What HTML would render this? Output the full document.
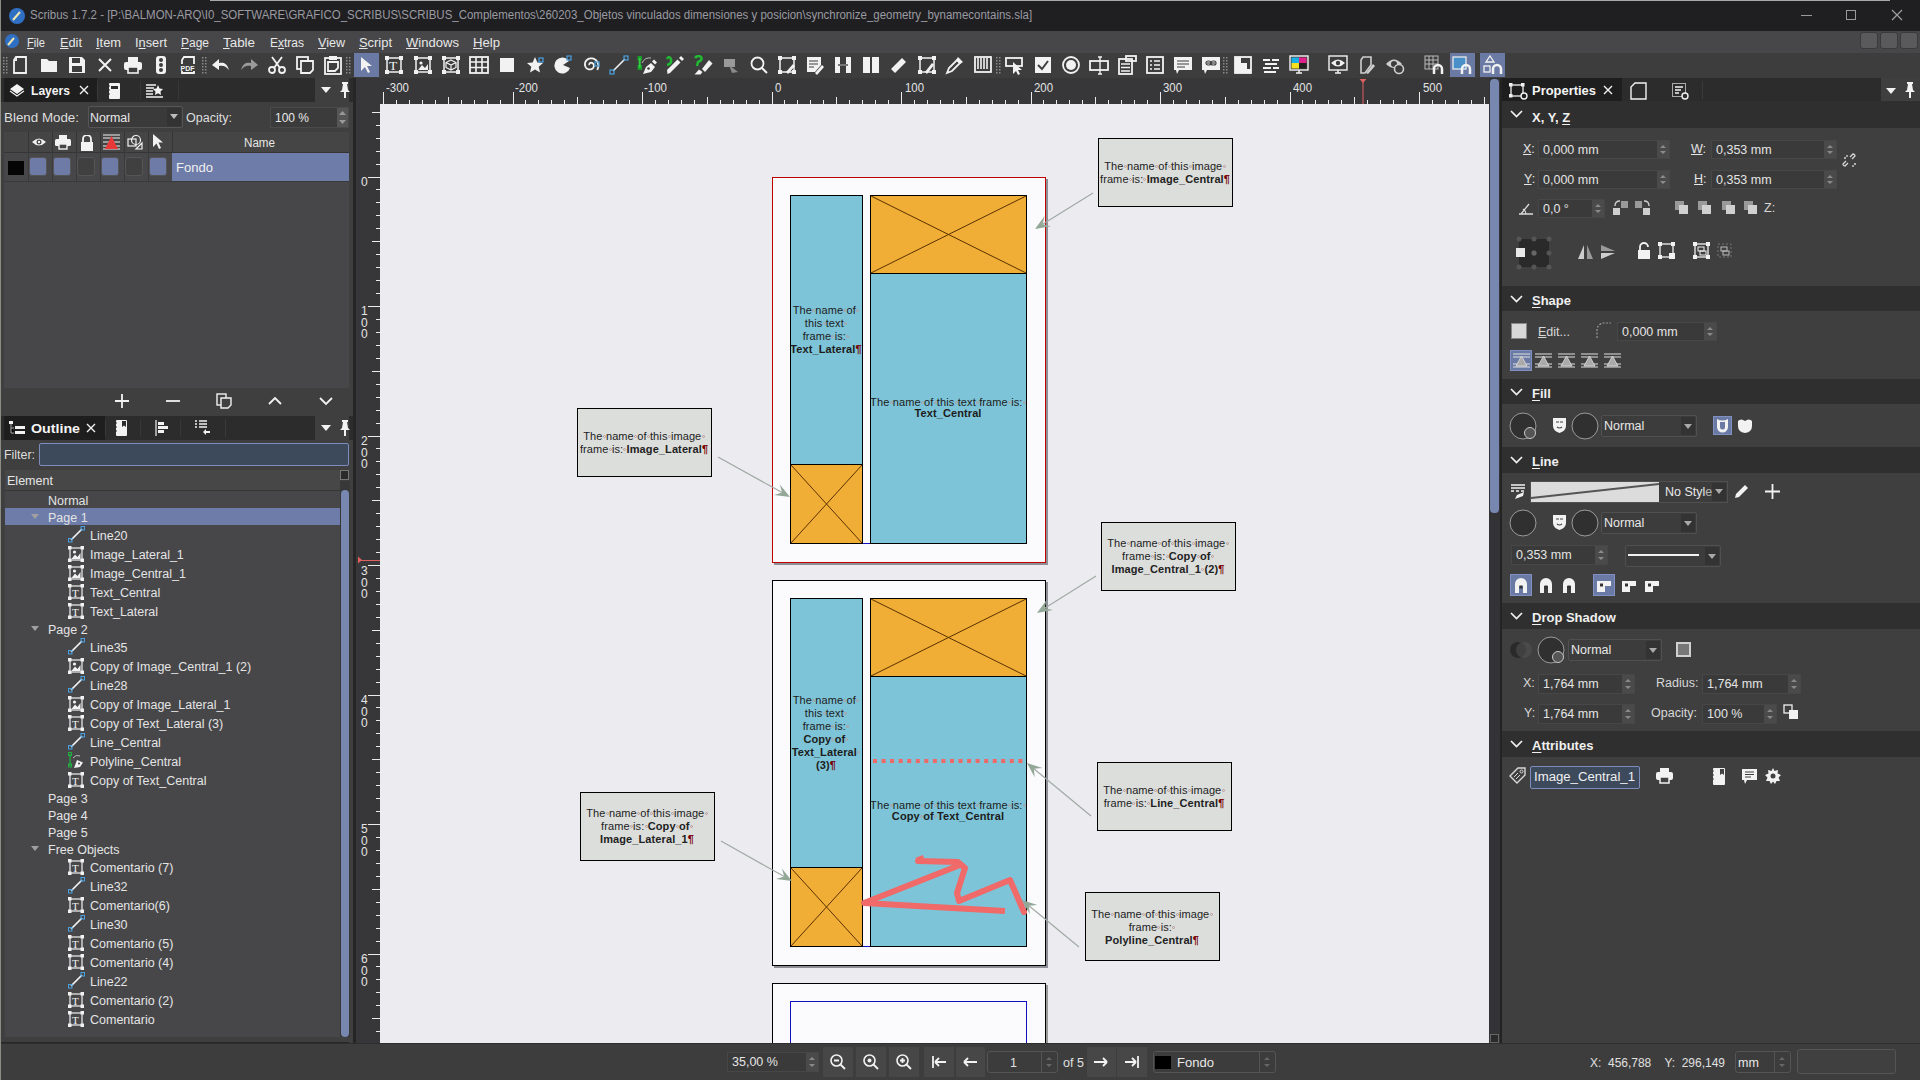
<!DOCTYPE html><html><head><meta charset="utf-8"><style>
*{margin:0;padding:0;box-sizing:border-box}
html,body{width:1920px;height:1080px;overflow:hidden;background:#3f3f3f;font-family:"Liberation Sans",sans-serif;color:#e6e6e6;font-size:12px;line-height:1}
div,svg{position:absolute}
.t{white-space:nowrap;transform-origin:0 0}
.ic{fill:none;stroke:#f2f2f2;stroke-width:1.6}
.f{fill:#f2f2f2}
</style></head><body><div style="left:0px;top:0px;width:1920px;height:31px;background:#1f1f22;"></div>
<div style="left:210px;top:0px;width:1680px;height:1px;background:#a8a8a8;"></div>
<div style="left:0px;top:31px;width:1920px;height:22px;background:#47474a;"></div>
<div style="left:0px;top:53px;width:1920px;height:25px;background:#3d3d3d;"></div>
<div style="left:0px;top:78px;width:353px;height:965px;background:#3f3f3f;"></div>
<div style="left:353px;top:78px;width:3px;height:965px;background:#262626;"></div>
<div style="left:356px;top:78px;width:1133px;height:26px;background:#37373a;"></div>
<div style="left:356px;top:104px;width:24px;height:939px;background:#37373a;"></div>
<div style="left:380px;top:104px;width:1109px;height:939px;background:#ebebf0;"></div>
<div style="left:1489px;top:78px;width:11px;height:965px;background:#333336;"></div>
<div style="left:1490px;top:79px;width:9px;height:434px;background:#7787b0;border-radius:4px"></div>
<div style="left:1490px;top:1034px;width:9px;height:9px;background:#2a2a2a;border:1px solid #666"></div>
<div style="left:1500px;top:78px;width:2px;height:965px;background:#232323;"></div>
<div style="left:1502px;top:78px;width:418px;height:965px;background:#3f3f3f;"></div>
<div style="left:0px;top:1043px;width:1920px;height:37px;background:#3d3d3d;"></div>
<svg style="left:8px;top:7px;" width="18" height="18" viewBox="0 0 18 18"><circle cx="9" cy="9" r="8" fill="#2f6fc4"/><path d="M5 13 L12 5" stroke="#f0e6b0" stroke-width="2"/></svg>
<div class="t" style="left:30px;top:9px;font-size:12px;color:#9a9aa0;transform:scaleX(0.9562);">Scribus 1.7.2 - [P:\BALMON-ARQ\I0_SOFTWARE\GRAFICO_SCRIBUS\SCRIBUS_Complementos\260203_Objetos vinculados dimensiones y posicion\synchronize_geometry_bynamecontains.sla]</div>
<div style="left:1801px;top:15px;width:11px;height:1px;background:#9a9a9a;"></div>
<div style="left:1846px;top:10px;width:10px;height:10px;background:transparent;border:1px solid #9a9a9a"></div>
<svg style="left:1891px;top:9px;" width="12" height="12" viewBox="0 0 12 12"><path d="M1 1 L11 11 M11 1 L1 11" stroke="#a0a0a0" stroke-width="1.2"/></svg>
<svg style="left:4px;top:33px;" width="16" height="16" viewBox="0 0 16 16"><circle cx="8" cy="8" r="7" fill="#2f6fc4"/><path d="M4 12 L10 5" stroke="#f0e6b0" stroke-width="2"/></svg>
<div class="t" style="left:27px;top:37px;font-size:12.5px;color:#e8e8e8;transform:scaleX(0.8937);"><span style="text-decoration:underline;text-underline-offset:1px">F</span>ile</div>
<div class="t" style="left:60px;top:37px;font-size:12.5px;color:#e8e8e8;transform:scaleX(1.0214);"><span style="text-decoration:underline;text-underline-offset:1px">E</span>dit</div>
<div class="t" style="left:96px;top:37px;font-size:12.5px;color:#e8e8e8;transform:scaleX(1.0284);"><span style="text-decoration:underline;text-underline-offset:1px">I</span>tem</div>
<div class="t" style="left:135px;top:37px;font-size:12.5px;color:#e8e8e8;transform:scaleX(1.0237);">I<span style="text-decoration:underline;text-underline-offset:1px">n</span>sert</div>
<div class="t" style="left:181px;top:37px;font-size:12.5px;color:#e8e8e8;transform:scaleX(0.9592);"><span style="text-decoration:underline;text-underline-offset:1px">P</span>age</div>
<div class="t" style="left:223px;top:37px;font-size:12.5px;color:#e8e8e8;transform:scaleX(1.0709);"><span style="text-decoration:underline;text-underline-offset:1px">T</span>able</div>
<div class="t" style="left:270px;top:37px;font-size:12.5px;color:#e8e8e8;transform:scaleX(0.9598);">E<span style="text-decoration:underline;text-underline-offset:1px">x</span>tras</div>
<div class="t" style="left:318px;top:37px;font-size:12.5px;color:#e8e8e8;transform:scaleX(1.0049);"><span style="text-decoration:underline;text-underline-offset:1px">V</span>iew</div>
<div class="t" style="left:359px;top:37px;font-size:12.5px;color:#e8e8e8;transform:scaleX(1.0328);"><span style="text-decoration:underline;text-underline-offset:1px">S</span>cript</div>
<div class="t" style="left:406px;top:37px;font-size:12.5px;color:#e8e8e8;transform:scaleX(1.0452);"><span style="text-decoration:underline;text-underline-offset:1px">W</span>indows</div>
<div class="t" style="left:473px;top:37px;font-size:12.5px;color:#e8e8e8;transform:scaleX(1.0503);"><span style="text-decoration:underline;text-underline-offset:1px">H</span>elp</div>
<div style="left:1860px;top:32px;width:18px;height:17px;background:#5a5a5c;border:1px solid #3a3a3a;border-radius:3px"></div>
<div style="left:1880px;top:32px;width:18px;height:17px;background:#5a5a5c;border:1px solid #3a3a3a;border-radius:3px"></div>
<div style="left:1900px;top:32px;width:18px;height:17px;background:#5a5a5c;border:1px solid #3a3a3a;border-radius:3px"></div>
<svg style="left:3px;top:57px;" width="5" height="18" viewBox="0 0 5 18"><rect x="0" y="0" width="1.5" height="1.5" fill="#8a8a8a"/><rect x="3" y="0" width="1.5" height="1.5" fill="#8a8a8a"/><rect x="0" y="3" width="1.5" height="1.5" fill="#8a8a8a"/><rect x="3" y="3" width="1.5" height="1.5" fill="#8a8a8a"/><rect x="0" y="6" width="1.5" height="1.5" fill="#8a8a8a"/><rect x="3" y="6" width="1.5" height="1.5" fill="#8a8a8a"/><rect x="0" y="9" width="1.5" height="1.5" fill="#8a8a8a"/><rect x="3" y="9" width="1.5" height="1.5" fill="#8a8a8a"/><rect x="0" y="12" width="1.5" height="1.5" fill="#8a8a8a"/><rect x="3" y="12" width="1.5" height="1.5" fill="#8a8a8a"/><rect x="0" y="15" width="1.5" height="1.5" fill="#8a8a8a"/><rect x="3" y="15" width="1.5" height="1.5" fill="#8a8a8a"/></svg>
<svg style="left:202px;top:57px;" width="5" height="18" viewBox="0 0 5 18"><rect x="0" y="0" width="1.5" height="1.5" fill="#8a8a8a"/><rect x="3" y="0" width="1.5" height="1.5" fill="#8a8a8a"/><rect x="0" y="3" width="1.5" height="1.5" fill="#8a8a8a"/><rect x="3" y="3" width="1.5" height="1.5" fill="#8a8a8a"/><rect x="0" y="6" width="1.5" height="1.5" fill="#8a8a8a"/><rect x="3" y="6" width="1.5" height="1.5" fill="#8a8a8a"/><rect x="0" y="9" width="1.5" height="1.5" fill="#8a8a8a"/><rect x="3" y="9" width="1.5" height="1.5" fill="#8a8a8a"/><rect x="0" y="12" width="1.5" height="1.5" fill="#8a8a8a"/><rect x="3" y="12" width="1.5" height="1.5" fill="#8a8a8a"/><rect x="0" y="15" width="1.5" height="1.5" fill="#8a8a8a"/><rect x="3" y="15" width="1.5" height="1.5" fill="#8a8a8a"/></svg>
<svg style="left:346px;top:57px;" width="5" height="18" viewBox="0 0 5 18"><rect x="0" y="0" width="1.5" height="1.5" fill="#8a8a8a"/><rect x="3" y="0" width="1.5" height="1.5" fill="#8a8a8a"/><rect x="0" y="3" width="1.5" height="1.5" fill="#8a8a8a"/><rect x="3" y="3" width="1.5" height="1.5" fill="#8a8a8a"/><rect x="0" y="6" width="1.5" height="1.5" fill="#8a8a8a"/><rect x="3" y="6" width="1.5" height="1.5" fill="#8a8a8a"/><rect x="0" y="9" width="1.5" height="1.5" fill="#8a8a8a"/><rect x="3" y="9" width="1.5" height="1.5" fill="#8a8a8a"/><rect x="0" y="12" width="1.5" height="1.5" fill="#8a8a8a"/><rect x="3" y="12" width="1.5" height="1.5" fill="#8a8a8a"/><rect x="0" y="15" width="1.5" height="1.5" fill="#8a8a8a"/><rect x="3" y="15" width="1.5" height="1.5" fill="#8a8a8a"/></svg>
<svg style="left:996px;top:57px;" width="5" height="18" viewBox="0 0 5 18"><rect x="0" y="0" width="1.5" height="1.5" fill="#8a8a8a"/><rect x="3" y="0" width="1.5" height="1.5" fill="#8a8a8a"/><rect x="0" y="3" width="1.5" height="1.5" fill="#8a8a8a"/><rect x="3" y="3" width="1.5" height="1.5" fill="#8a8a8a"/><rect x="0" y="6" width="1.5" height="1.5" fill="#8a8a8a"/><rect x="3" y="6" width="1.5" height="1.5" fill="#8a8a8a"/><rect x="0" y="9" width="1.5" height="1.5" fill="#8a8a8a"/><rect x="3" y="9" width="1.5" height="1.5" fill="#8a8a8a"/><rect x="0" y="12" width="1.5" height="1.5" fill="#8a8a8a"/><rect x="3" y="12" width="1.5" height="1.5" fill="#8a8a8a"/><rect x="0" y="15" width="1.5" height="1.5" fill="#8a8a8a"/><rect x="3" y="15" width="1.5" height="1.5" fill="#8a8a8a"/></svg>
<svg style="left:1223px;top:57px;" width="5" height="18" viewBox="0 0 5 18"><rect x="0" y="0" width="1.5" height="1.5" fill="#8a8a8a"/><rect x="3" y="0" width="1.5" height="1.5" fill="#8a8a8a"/><rect x="0" y="3" width="1.5" height="1.5" fill="#8a8a8a"/><rect x="3" y="3" width="1.5" height="1.5" fill="#8a8a8a"/><rect x="0" y="6" width="1.5" height="1.5" fill="#8a8a8a"/><rect x="3" y="6" width="1.5" height="1.5" fill="#8a8a8a"/><rect x="0" y="9" width="1.5" height="1.5" fill="#8a8a8a"/><rect x="3" y="9" width="1.5" height="1.5" fill="#8a8a8a"/><rect x="0" y="12" width="1.5" height="1.5" fill="#8a8a8a"/><rect x="3" y="12" width="1.5" height="1.5" fill="#8a8a8a"/><rect x="0" y="15" width="1.5" height="1.5" fill="#8a8a8a"/><rect x="3" y="15" width="1.5" height="1.5" fill="#8a8a8a"/></svg>
<svg style="left:10px;top:55px;" width="20" height="20" viewBox="0 0 20 20"><path d="M6 2 H16 V18 H4 V5 Z" stroke="#f2f2f2" fill="none" stroke-width="1.8"/><path d="M4 6 L7 2 L7 6Z" fill="#f2f2f2"/></svg>
<svg style="left:39px;top:55px;" width="20" height="20" viewBox="0 0 20 20"><path d="M2 4 H8 L10 6 H18 V17 H2 Z" fill="#f2f2f2"/></svg>
<svg style="left:67px;top:55px;" width="20" height="20" viewBox="0 0 20 20"><path d="M2 2 H15 L18 5 V18 H2 Z" fill="#f2f2f2"/><rect x="5" y="3" width="8" height="5" fill="#3d3d3d"/><rect x="5" y="11" width="10" height="6" fill="#3d3d3d"/></svg>
<svg style="left:95px;top:55px;" width="20" height="20" viewBox="0 0 20 20"><path d="M4 4 L16 16 M16 4 L4 16" stroke="#f2f2f2" stroke-width="2"/></svg>
<svg style="left:123px;top:55px;" width="20" height="20" viewBox="0 0 20 20"><rect x="5" y="2" width="10" height="5" fill="#f2f2f2"/><rect x="1" y="7" width="18" height="8" rx="2" fill="#f2f2f2"/><rect x="5" y="12" width="10" height="6" fill="#3d3d3d" stroke="#f2f2f2" stroke-width="1.6"/></svg>
<svg style="left:151px;top:55px;" width="20" height="20" viewBox="0 0 20 20"><rect x="5" y="1" width="10" height="18" rx="3" fill="#f2f2f2"/><circle cx="10" cy="5" r="2" fill="#3d3d3d"/><circle cx="10" cy="10" r="2" fill="#3d3d3d"/><circle cx="10" cy="15" r="2" fill="#3d3d3d"/></svg>
<svg style="left:178px;top:55px;" width="20" height="20" viewBox="0 0 20 20"><path d="M6 2 H16 V18 H4 V5 Z" stroke="#f2f2f2" fill="none" stroke-width="1.8"/><rect x="2" y="9" width="17" height="7" fill="#3d3d3d"/><text x="2.5" y="15.5" font-size="7" font-weight="bold" fill="#f2f2f2" font-family="Liberation Sans">PDF</text></svg>
<svg style="left:211px;top:55px;" width="20" height="20" viewBox="0 0 20 20"><path d="M18 15 C16 8 12 7 8 8 V4 L1 10 L8 15 V11 C12 10 15 11 18 15Z" fill="#f2f2f2"/></svg>
<svg style="left:239px;top:55px;" width="20" height="20" viewBox="0 0 20 20"><path d="M2 15 C4 8 8 7 12 8 V4 L19 10 L12 15 V11 C8 10 5 11 2 15Z" fill="#9a9a9a"/></svg>
<svg style="left:267px;top:55px;" width="20" height="20" viewBox="0 0 20 20"><circle cx="5" cy="15" r="3" stroke="#f2f2f2" fill="none" stroke-width="1.8"/><circle cx="15" cy="15" r="3" stroke="#f2f2f2" fill="none" stroke-width="1.8"/><path d="M7 13 L15 2 M13 13 L5 2" stroke="#f2f2f2" stroke-width="1.8"/></svg>
<svg style="left:295px;top:55px;" width="20" height="20" viewBox="0 0 20 20"><rect x="2" y="2" width="11" height="12" stroke="#f2f2f2" fill="none" stroke-width="1.8"/><path d="M6 6 H18 V15 L15 18 H6 Z" fill="#3d3d3d" stroke="#f2f2f2" stroke-width="1.8"/></svg>
<svg style="left:323px;top:55px;" width="20" height="20" viewBox="0 0 20 20"><rect x="2" y="3" width="16" height="16" stroke="#f2f2f2" fill="none" stroke-width="1.8"/><rect x="6" y="1" width="8" height="4" fill="#f2f2f2"/><path d="M5 7 H15 V13 L12 16 H5Z" stroke="#f2f2f2" fill="none" stroke-width="1.8"/></svg>
<div style="left:354px;top:53px;width:25px;height:24px;background:#6b7aa4;"></div>
<svg style="left:356px;top:55px;" width="20" height="20" viewBox="0 0 20 20"><path d="M5 2 L5 16 L9 12 L12 18 L14 17 L11 11 L16 11 Z" fill="#f2f2f2"/></svg>
<svg style="left:384px;top:55px;" width="20" height="20" viewBox="0 0 20 20"><rect x="3" y="3" width="14" height="14" stroke="#f2f2f2" fill="none" stroke-width="1.5"/><rect x="1" y="1" width="4" height="4" fill="#f2f2f2"/><rect x="15" y="1" width="4" height="4" fill="#f2f2f2"/><rect x="1" y="15" width="4" height="4" fill="#f2f2f2"/><rect x="15" y="15" width="4" height="4" fill="#f2f2f2"/><text x="5" y="15" font-size="13.5" fill="#f2f2f2" font-family="Liberation Serif">T</text></svg>
<svg style="left:413px;top:55px;" width="20" height="20" viewBox="0 0 20 20"><rect x="3" y="3" width="14" height="14" stroke="#f2f2f2" fill="none" stroke-width="1.5"/><rect x="1" y="1" width="4" height="4" fill="#f2f2f2"/><rect x="15" y="1" width="4" height="4" fill="#f2f2f2"/><rect x="1" y="15" width="4" height="4" fill="#f2f2f2"/><rect x="15" y="15" width="4" height="4" fill="#f2f2f2"/><circle cx="8" cy="8" r="1.6" fill="#f2f2f2"/><path d="M5 15 L9 10 L12 13 L15 9 V15Z" fill="#f2f2f2"/></svg>
<svg style="left:441px;top:55px;" width="20" height="20" viewBox="0 0 20 20"><rect x="3" y="3" width="14" height="14" stroke="#f2f2f2" fill="none" stroke-width="1.5"/><rect x="1" y="1" width="4" height="4" fill="#f2f2f2"/><rect x="15" y="1" width="4" height="4" fill="#f2f2f2"/><rect x="1" y="15" width="4" height="4" fill="#f2f2f2"/><rect x="15" y="15" width="4" height="4" fill="#f2f2f2"/><path d="M10 5 L15 7.5 V12.5 L10 15 L5 12.5 V7.5Z M5 7.5 L10 10 L15 7.5 M10 10 V15" stroke="#f2f2f2" fill="none" stroke-width="1.2"/></svg>
<svg style="left:469px;top:55px;" width="20" height="20" viewBox="0 0 20 20"><rect x="1" y="2" width="18" height="16" stroke="#f2f2f2" fill="none" stroke-width="1.8"/><path d="M1 7 H19 M1 12.5 H19 M7 2 V18 M13 2 V18" stroke="#f2f2f2" stroke-width="1.6"/></svg>
<svg style="left:497px;top:55px;" width="20" height="20" viewBox="0 0 20 20"><rect x="3" y="3" width="14" height="14" fill="#f2f2f2"/></svg>
<svg style="left:525px;top:55px;" width="20" height="20" viewBox="0 0 20 20"><path d="M10 2 L12.4 7.5 L18 8 L13.7 11.8 L15 17.5 L10 14.5 L5 17.5 L6.3 11.8 L2 8 L7.6 7.5Z" fill="#f2f2f2"/><rect x="14" y="3" width="4" height="4" fill="none" stroke="#4aa0e0" stroke-width="1.2"/></svg>
<svg style="left:553px;top:55px;" width="20" height="20" viewBox="0 0 20 20"><path d="M10 10 L16 6 A8 8 0 1 0 17 13 Z" fill="#f2f2f2"/><rect x="14" y="1" width="4" height="4" fill="none" stroke="#4aa0e0" stroke-width="1.2"/></svg>
<svg style="left:581px;top:55px;" width="20" height="20" viewBox="0 0 20 20"><path d="M8.50 10.00 L8.44 9.91 L8.40 9.81 L8.36 9.71 L8.33 9.59 L8.31 9.47 L8.31 9.34 L8.32 9.21 L8.34 9.08 L8.38 8.94 L8.43 8.81 L8.49 8.67 L8.58 8.54 L8.67 8.42 L8.79 8.30 L8.91 8.19 L9.05 8.09 L9.20 8.00 L9.37 7.92 L9.54 7.85 L9.73 7.81 L9.92 7.77 L10.13 7.76 L10.33 7.76 L10.54 7.79 L10.75 7.83 L10.97 7.89 L11.18 7.97 L11.38 8.08 L11.58 8.20 L11.77 8.35 L11.95 8.51 L12.12 8.70 L12.28 8.90 L12.42 9.12 L12.54 9.35 L12.65 9.60 L12.73 9.86 L12.79 10.14 L12.83 10.42 L12.84 10.71 L12.82 11.00 L12.79 11.30 L12.72 11.60 L12.63 11.89 L12.50 12.18 L12.36 12.47 L12.18 12.74 L11.98 13.00 L11.76 13.25 L11.51 13.48 L11.24 13.69 L10.94 13.88 L10.63 14.04 L10.30 14.18 L9.95 14.29 L9.59 14.38 L9.22 14.43 L8.84 14.45 L8.46 14.44 L8.07 14.39 L7.69 14.31 L7.30 14.20 L6.93 14.05 L6.56 13.87 L6.21 13.66 L5.87 13.41 L5.55 13.13 L5.25 12.82 L4.98 12.49 L4.73 12.12 L4.51 11.74 L4.32 11.33 L4.17 10.90 L4.06 10.46 L3.98 10.00 L3.94 9.53 L3.93 9.06 L3.97 8.58 L4.06 8.10 L4.18 7.63 L4.34 7.16 L4.55 6.71 L4.79 6.27 L5.08 5.85 L5.40 5.45 L5.76 5.07 L6.15 4.72 L6.58 4.41 L7.03 4.13 L7.51 3.89 L8.02 3.68 L8.54 3.52 L9.08 3.40 L9.64 3.33 L10.20 3.31 L10.77 3.33 L11.34 3.40 L11.91 3.52 L12.47 3.69 L13.02 3.91 L13.55 4.18 L14.06 4.49 L14.55 4.85 L15.01 5.25 L15.43 5.69 L15.82 6.17 L16.18 6.69 L16.49 7.23 L16.75 7.81 L16.97 8.41 L17.13 9.04 L17.25 9.68 L17.31 10.33 L17.31 10.99 L17.26 11.65 L17.16 12.31 L16.99 12.97 L16.77 13.61 L16.50 14.24 L16.16 14.84" stroke="#f2f2f2" fill="none" stroke-width="1.8"/><rect x="14" y="7" width="4" height="4" fill="none" stroke="#4aa0e0" stroke-width="1.2"/></svg>
<svg style="left:609px;top:55px;" width="20" height="20" viewBox="0 0 20 20"><path d="M4 16 L16 4" stroke="#f2f2f2" stroke-width="1.6"/><rect x="1" y="15" width="4" height="4" fill="none" stroke="#4aa0e0" stroke-width="1.2"/><rect x="15" y="1" width="4" height="4" fill="none" stroke="#4aa0e0" stroke-width="1.2"/></svg>
<svg style="left:637px;top:55px;" width="20" height="20" viewBox="0 0 20 20"><rect x="0.5" y="1" width="4.5" height="4.5" fill="#1a9a2a"/><rect x="0.5" y="10" width="4.5" height="5" fill="#1a9a2a"/><path d="M2.7 3 V13" stroke="#30d040" stroke-width="2"/><path d="M5 8 Q8 2 14 3" stroke="#bbb" stroke-width="1" fill="none"/><path d="M6 19 L9 12 L14 8 L18 12 L14 17Z" fill="#f2f2f2"/><path d="M15 6.5 L17 4.5 L20 7.5 L18 9.5Z" fill="#f2f2f2"/><circle cx="11.5" cy="13.5" r="1.3" fill="#3d3d3d"/></svg>
<svg style="left:665px;top:55px;" width="20" height="20" viewBox="0 0 20 20"><path d="M2 4 Q4 0 6 4 Q7 9 2 10" stroke="#22b834" stroke-width="2.5" fill="none"/><path d="M2.5 19 L2 15 L12.5 4.5 L15.5 7.5 L5 18Z" fill="#f2f2f2"/><path d="M14 3 L16 1 L19 4 L17 6Z" fill="#f2f2f2"/></svg>
<svg style="left:693px;top:55px;" width="20" height="20" viewBox="0 0 20 20"><path d="M2 3 Q5 -0.5 8 2 Q10 5 5 7 L4 11" stroke="#22b834" stroke-width="2.5" fill="none"/><path d="M9 14 L16 5 L19.5 8.5 L12 17Z" fill="#f2f2f2"/><path d="M1.5 19.5 L6 14.5 L9.5 17 L7.5 19.5Z" fill="#f2f2f2"/></svg>
<svg style="left:721px;top:55px;" width="20" height="20" viewBox="0 0 20 20"><path d="M3 4 H14 V12 H3Z" fill="#9a9a9a"/><path d="M8 10 L17 17 L11 18Z" fill="#8a8a8a"/></svg>
<svg style="left:749px;top:55px;" width="20" height="20" viewBox="0 0 20 20"><circle cx="8.5" cy="8.5" r="6" stroke="#f2f2f2" fill="none" stroke-width="1.8"/><path d="M13 13 L18 18" stroke="#f2f2f2" stroke-width="2"/></svg>
<svg style="left:777px;top:55px;" width="20" height="20" viewBox="0 0 20 20"><rect x="3" y="3" width="14" height="14" stroke="#f2f2f2" fill="none" stroke-width="1.5"/><rect x="1" y="1" width="4" height="4" fill="#f2f2f2"/><rect x="15" y="1" width="4" height="4" fill="#f2f2f2"/><rect x="1" y="15" width="4" height="4" fill="#f2f2f2"/><rect x="15" y="15" width="4" height="4" fill="#f2f2f2"/><path d="M9 17 L16 9 L18 11 L11 19Z" fill="#f2f2f2"/></svg>
<svg style="left:805px;top:55px;" width="20" height="20" viewBox="0 0 20 20"><path d="M2 2 H16 V10 L10 17 H2Z" fill="#f2f2f2"/><path d="M4 6 H13 M4 9 H13 M4 12 H9" stroke="#3d3d3d" stroke-width="1.2"/><path d="M10 18 L17 10 L19 12 L12 20Z" fill="#f2f2f2"/></svg>
<svg style="left:833px;top:55px;" width="20" height="20" viewBox="0 0 20 20"><rect x="2" y="2" width="16" height="16" fill="#f2f2f2"/><rect x="7" y="2" width="6" height="16" fill="#3d3d3d"/><rect x="5" y="9" width="10" height="2" fill="#777"/></svg>
<svg style="left:861px;top:55px;" width="20" height="20" viewBox="0 0 20 20"><rect x="2" y="2" width="7" height="16" fill="#f2f2f2"/><rect x="11" y="2" width="7" height="16" fill="#f2f2f2"/></svg>
<svg style="left:889px;top:55px;" width="20" height="20" viewBox="0 0 20 20"><path d="M2 14 L13 3 L17 7 L6 18Z" fill="#f2f2f2"/></svg>
<svg style="left:917px;top:55px;" width="20" height="20" viewBox="0 0 20 20"><rect x="3" y="3" width="14" height="14" stroke="#f2f2f2" fill="none" stroke-width="1.5"/><rect x="1" y="1" width="4" height="4" fill="#f2f2f2"/><rect x="15" y="1" width="4" height="4" fill="#f2f2f2"/><rect x="1" y="15" width="4" height="4" fill="#f2f2f2"/><rect x="15" y="15" width="4" height="4" fill="#f2f2f2"/><path d="M8 17 L15 8 L17 10 L10 19Z" fill="#f2f2f2"/></svg>
<svg style="left:945px;top:55px;" width="20" height="20" viewBox="0 0 20 20"><path d="M2 18 L4 13 L12 5 L15 8 L7 16Z" stroke="#f2f2f2" fill="none" stroke-width="1.8"/><path d="M13 2 L18 7 L15 9 L11 5Z" fill="#f2f2f2"/></svg>
<svg style="left:973px;top:55px;" width="20" height="20" viewBox="0 0 20 20"><rect x="2" y="2" width="16" height="15" stroke="#f2f2f2" fill="none" stroke-width="1.8"/><path d="M5 3 V14 M8 3 V14 M11 3 V14 M14 3 V14" stroke="#f2f2f2" stroke-width="1.6"/></svg>
<svg style="left:1005px;top:55px;" width="20" height="20" viewBox="0 0 20 20"><rect x="1" y="3" width="16" height="8" stroke="#f2f2f2" fill="none" stroke-width="1.8"/><path d="M8 7 L8 19 L11 16 L13 20 L15 19 L13 15 L17 15Z" fill="#f2f2f2"/></svg>
<svg style="left:1033px;top:55px;" width="20" height="20" viewBox="0 0 20 20"><rect x="2" y="2" width="16" height="16" fill="#f2f2f2"/><path d="M5 10 L9 14 L15 6" stroke="#3d3d3d" stroke-width="2" fill="none"/></svg>
<svg style="left:1061px;top:55px;" width="20" height="20" viewBox="0 0 20 20"><circle cx="10" cy="10" r="8" stroke="#f2f2f2" fill="none" stroke-width="1.8"/><circle cx="10" cy="10" r="5" fill="#f2f2f2"/></svg>
<svg style="left:1089px;top:55px;" width="20" height="20" viewBox="0 0 20 20"><rect x="1" y="6" width="18" height="9" stroke="#f2f2f2" fill="none" stroke-width="1.8"/><path d="M11 2 V19 M9 2 H13 M9 19 H13" stroke="#f2f2f2" stroke-width="1.4"/></svg>
<svg style="left:1117px;top:55px;" width="20" height="20" viewBox="0 0 20 20"><rect x="2" y="4" width="13" height="15" stroke="#f2f2f2" fill="none" stroke-width="1.8"/><rect x="9" y="1" width="10" height="5" stroke="#f2f2f2" fill="none" stroke-width="1.8"/><path d="M4 9 H13 M4 12.5 H13 M4 16 H13" stroke="#f2f2f2" stroke-width="1.6"/></svg>
<svg style="left:1145px;top:55px;" width="20" height="20" viewBox="0 0 20 20"><rect x="2" y="2" width="16" height="16" stroke="#f2f2f2" fill="none" stroke-width="1.8"/><path d="M5 6 H7 M9 6 H15 M5 10 H7 M9 10 H15 M5 14 H7 M9 14 H15" stroke="#f2f2f2" stroke-width="1.6"/></svg>
<svg style="left:1173px;top:55px;" width="20" height="20" viewBox="0 0 20 20"><path d="M1 2 H19 V15 H6 L4 19 L3 15 H1Z" fill="#f2f2f2"/><path d="M4 6 H16 M4 9 H16 M4 12 H12" stroke="#3d3d3d" stroke-width="1.2"/></svg>
<svg style="left:1201px;top:55px;" width="20" height="20" viewBox="0 0 20 20"><path d="M1 2 H19 V15 H6 L4 19 L3 15 H1Z" fill="#f2f2f2"/><path d="M6 8 H14" stroke="#3d3d3d" stroke-width="1.2"/><rect x="5" y="6" width="5" height="4" rx="2" fill="none" stroke="#3d3d3d" stroke-width="1.2"/><rect x="10" y="6" width="5" height="4" rx="2" fill="none" stroke="#3d3d3d" stroke-width="1.2"/></svg>
<svg style="left:1233px;top:55px;" width="20" height="20" viewBox="0 0 20 20"><rect x="2" y="2" width="16" height="16" stroke="#f2f2f2" fill="none" stroke-width="1.8"/><path d="M2 2 H8 V8 H14 V14 H18 V18 H2Z" fill="#f2f2f2"/></svg>
<svg style="left:1261px;top:55px;" width="20" height="20" viewBox="0 0 20 20"><path d="M2 5 H9 M11 5 H18 M4 9 H16 M2 13 H10 M12 13 H18 M3 17 H15" stroke="#f2f2f2" stroke-width="2.2"/></svg>
<svg style="left:1289px;top:55px;" width="20" height="20" viewBox="0 0 20 20"><rect x="1" y="1" width="18" height="14" fill="none" stroke="#f2f2f2" stroke-width="1.4"/><rect x="2.5" y="2.5" width="7.5" height="5.5" fill="#18b0e8"/><rect x="10" y="2.5" width="7.5" height="5.5" fill="#e0208a"/><rect x="2.5" y="8" width="7.5" height="5.5" fill="#f8e020"/><rect x="10" y="8" width="7.5" height="5.5" fill="#202020"/><path d="M7 18 H13 M10 15 V18" stroke="#f2f2f2" stroke-width="1.5"/></svg>
<svg style="left:1328px;top:55px;" width="20" height="20" viewBox="0 0 20 20"><rect x="1" y="1" width="18" height="14" fill="none" stroke="#f2f2f2" stroke-width="1.4"/><path d="M3 8 Q10 1 17 8 Q10 15 3 8Z" fill="#f2f2f2"/><circle cx="10" cy="8" r="2.2" fill="#3d3d3d"/><path d="M7 18 H13 M10 15 V18" stroke="#f2f2f2" stroke-width="1.5"/></svg>
<svg style="left:1357px;top:55px;" width="20" height="20" viewBox="0 0 20 20"><path d="M6 2 H14 V10 L8 18 H4 V5Z" fill="none" stroke="#cfcfcf" stroke-width="1.6"/><path d="M9 18 L16 9 L18 11 L11 19Z" fill="#cfcfcf"/></svg>
<svg style="left:1385px;top:55px;" width="20" height="20" viewBox="0 0 20 20"><path d="M1 9 Q9 0 17 9 Q9 17 1 9Z" fill="#cfcfcf"/><circle cx="9" cy="9" r="3" fill="#3d3d3d"/><circle cx="14" cy="14" r="4.5" fill="#3d3d3d" stroke="#cfcfcf" stroke-width="1.6"/></svg>
<svg style="left:1424px;top:55px;" width="20" height="20" viewBox="0 0 20 20"><rect x="1" y="1" width="13" height="13" fill="none" stroke="#bbb" stroke-width="1"/><path d="M5 1 V14 M9 1 V14 M1 5 H14 M1 9 H14" stroke="#bbb" stroke-width="1"/><path d="M10 19 V14 A4 4 0 0 1 18 14 V19" stroke="#f2f2f2" stroke-width="2.5" fill="none"/></svg>
<div style="left:1450px;top:53px;width:25px;height:24px;background:#6b7aa4;"></div>
<div style="left:1480px;top:53px;width:25px;height:24px;background:#6b7aa4;"></div>
<svg style="left:1452px;top:55px;" width="20" height="20" viewBox="0 0 20 20"><rect x="1" y="2" width="13" height="12" fill="#4a90c8" stroke="#f2f2f2" stroke-width="1.2"/><path d="M10 19 V14 A4 4 0 0 1 18 14 V19" stroke="#f2f2f2" stroke-width="2.5" fill="none"/></svg>
<svg style="left:1483px;top:55px;" width="20" height="20" viewBox="0 0 20 20"><path d="M7 1 L11 7 H3Z" fill="none" stroke="#f2f2f2" stroke-width="1.3"/><rect x="1" y="11" width="6" height="6" fill="none" stroke="#f2f2f2" stroke-width="1.3"/><path d="M10 19 V14 A4 4 0 0 1 18 14 V19" stroke="#f2f2f2" stroke-width="2.5" fill="none"/></svg>
<div style="left:0px;top:78px;width:353px;height:24px;background:#2c2c2c;"></div>
<div style="left:4px;top:78px;width:93px;height:24px;background:#1e1e1e;"></div>
<svg style="left:9px;top:83px" width="16" height="14" viewBox="0 0 16 14"><path d="M8 1 L15 6 L8 11 L1 6Z" fill="#f2f2f2"/><path d="M1 8 L8 13 L15 8" stroke="#f2f2f2" fill="none" stroke-width="1.2"/></svg>
<div class="t" style="left:31px;top:84px;font-size:13px;color:#f4f4f4;font-weight:bold;transform:scaleX(0.9304);">Layers</div>
<svg style="left:79px;top:85px;" width="10" height="10" viewBox="0 0 10 10"><path d="M1 1 L9 9 M9 1 L1 9" stroke="#f2f2f2" stroke-width="1.4"/></svg>
<svg style="left:107px;top:83px" width="14" height="16" viewBox="0 0 14 16"><rect x="2" y="0" width="11" height="16" rx="1" fill="#f2f2f2"/><rect x="4" y="3" width="7" height="3" fill="#2c2c2c"/><path d="M1 3 H3 M1 7 H3 M1 11 H3" stroke="#2c2c2c" stroke-width="1"/></svg>
<svg style="left:146px;top:84px" width="18" height="14" viewBox="0 0 18 14"><path d="M0 1 H10 M0 4 H8 M0 7 H7 M0 10 H7 M0 13 H17" stroke="#f2f2f2" stroke-width="1.3"/><path d="M12 1 L13.5 4.5 L17 5 L14.5 7.5 L15 11 L12 9.3 L9 11 L9.5 7.5 L7 5 L10.5 4.5Z" fill="#f2f2f2"/></svg>
<div style="left:315px;top:78px;width:34px;height:24px;background:#3f3f3f;"></div>
<svg style="left:321px;top:87px;" width="10" height="6" viewBox="0 0 10 6"><path d="M0 0 H10 L5 6Z" fill="#f2f2f2"/></svg>
<svg style="left:339px;top:82px;" width="12" height="16" viewBox="0 0 12 16"><path d="M3 0 H9 V2 H8 L9 8 L11 10 H7 V16 H5 V10 H1 L3 8 L4 2 H3Z" fill="#f2f2f2"/></svg>
<div style="left:97px;top:81px;width:1px;height:18px;background:#383838;"></div>
<div style="left:140px;top:81px;width:1px;height:18px;background:#383838;"></div>
<div style="left:178px;top:81px;width:1px;height:18px;background:#383838;"></div>
<div class="t" style="left:4px;top:112px;font-size:12.5px;color:#dedede;transform:scaleX(1.0687);">Blend Mode:</div>
<div style="left:88px;top:106px;width:95px;height:22px;background:#3a3a3a;border:1px solid #555;border-radius:2px"></div>
<div class="t" style="left:90px;top:112px;font-size:12.5px;color:#e8e8e8;transform:scaleX(0.9930);">Normal</div>
<div style="left:167px;top:108px;width:14px;height:18px;background:#333;"></div>
<svg style="left:170px;top:114px;" width="8" height="5" viewBox="0 0 8 5"><path d="M0 0 H8 L4 5Z" fill="#bbb"/></svg>
<div class="t" style="left:186px;top:112px;font-size:12.5px;color:#dedede;transform:scaleX(1.0033);">Opacity:</div>
<div style="left:270px;top:107px;width:79px;height:21px;background:#3b3b3b;border:1px solid #4a4a4a"></div>
<div class="t" style="left:275px;top:112px;font-size:12.5px;color:#e8e8e8;transform:scaleX(0.9593);">100 %</div>
<div style="left:337px;top:108px;width:11px;height:19px;background:#555;"></div>
<svg style="left:339px;top:110px;" width="7" height="15" viewBox="0 0 7 15"><path d="M0 5 L3.5 1 L7 5Z M0 10 L3.5 14 L7 10Z" fill="#999"/></svg>
<div style="left:4px;top:132px;width:345px;height:256px;background:#47474a;"></div>
<div style="left:4px;top:132px;width:345px;height:20px;background:#454545;"></div>
<div style="left:28px;top:132px;width:1px;height:20px;background:#353535;"></div>
<div style="left:52px;top:132px;width:1px;height:20px;background:#353535;"></div>
<div style="left:76px;top:132px;width:1px;height:20px;background:#353535;"></div>
<div style="left:100px;top:132px;width:1px;height:20px;background:#353535;"></div>
<div style="left:124px;top:132px;width:1px;height:20px;background:#353535;"></div>
<div style="left:148px;top:132px;width:1px;height:20px;background:#353535;"></div>
<div style="left:172px;top:132px;width:1px;height:20px;background:#353535;"></div>
<div style="left:4px;top:152px;width:345px;height:1px;background:#353535;"></div>
<svg style="left:31px;top:136px;" width="16" height="12" viewBox="0 0 16 12"><path d="M1 6 Q8 -1 15 6 Q8 13 1 6Z" fill="#f2f2f2"/><circle cx="8" cy="6" r="2.5" fill="#454545"/><circle cx="8" cy="6" r="1.2" fill="#f2f2f2"/></svg>
<svg style="left:55px;top:135px;" width="16" height="15" viewBox="0 0 16 15"><rect x="4" y="0" width="8" height="4" fill="#f2f2f2"/><rect x="0" y="4" width="16" height="7" rx="1.5" fill="#f2f2f2"/><rect x="4" y="9" width="8" height="5" fill="#454545" stroke="#f2f2f2" stroke-width="1.4"/></svg>
<svg style="left:80px;top:135px;" width="14" height="16" viewBox="0 0 14 16"><path d="M3 7 V4 A4 4 0 0 1 11 4 V7" stroke="#f2f2f2" stroke-width="1.8" fill="none"/><rect x="1" y="7" width="12" height="9" fill="#f2f2f2"/></svg>
<svg style="left:103px;top:134px;" width="17" height="16" viewBox="0 0 17 16"><path d="M0 1 H17 M0 4 H17 M0 8 H17 M0 12 H17 M0 15 H17" stroke="#f2f2f2" stroke-width="1"/><path d="M8.5 2 L15 15 H2Z" fill="#e83838"/></svg>
<svg style="left:127px;top:134px;" width="16" height="16" viewBox="0 0 16 16"><rect x="1" y="5" width="8" height="7" fill="none" stroke="#f2f2f2" stroke-width="1.2"/><circle cx="9" cy="6" r="4.5" fill="none" stroke="#f2f2f2" stroke-width="1.2"/><path d="M15 9 V15 H9Z" fill="none" stroke="#f2f2f2" stroke-width="1.2"/></svg>
<svg style="left:152px;top:134px;" width="12" height="16" viewBox="0 0 12 16"><path d="M1 0 V13 L4.5 9.5 L7 15 L9 14 L6.5 8.5 L11 8.5Z" fill="#f2f2f2"/></svg>
<div class="t" style="left:244px;top:137px;font-size:12.5px;color:#e6e6e6;transform:scaleX(0.9298);">Name</div>
<div style="left:4px;top:153px;width:345px;height:28px;background:#47474a;"></div>
<div style="left:8px;top:161px;width:16px;height:14px;background:#050505;"></div>
<div style="left:29px;top:157px;width:18px;height:19px;background:#6e7ba6;border:1px solid #555;border-radius:3px"></div>
<div style="left:53px;top:157px;width:18px;height:19px;background:#6e7ba6;border:1px solid #555;border-radius:3px"></div>
<div style="left:77px;top:157px;width:18px;height:19px;background:#404040;border:1px solid #555;border-radius:3px"></div>
<div style="left:101px;top:157px;width:18px;height:19px;background:#6e7ba6;border:1px solid #555;border-radius:3px"></div>
<div style="left:125px;top:157px;width:18px;height:19px;background:#404040;border:1px solid #555;border-radius:3px"></div>
<div style="left:149px;top:157px;width:18px;height:19px;background:#6e7ba6;border:1px solid #555;border-radius:3px"></div>
<div style="left:28px;top:153px;width:1px;height:28px;background:#3a3a3c;"></div>
<div style="left:52px;top:153px;width:1px;height:28px;background:#3a3a3c;"></div>
<div style="left:76px;top:153px;width:1px;height:28px;background:#3a3a3c;"></div>
<div style="left:100px;top:153px;width:1px;height:28px;background:#3a3a3c;"></div>
<div style="left:124px;top:153px;width:1px;height:28px;background:#3a3a3c;"></div>
<div style="left:148px;top:153px;width:1px;height:28px;background:#3a3a3c;"></div>
<div style="left:4px;top:181px;width:345px;height:1px;background:#3a3a3c;"></div>
<div style="left:172px;top:153px;width:177px;height:28px;background:#6d7ca8;"></div>
<div class="t" style="left:176px;top:162px;font-size:12.5px;color:#f0f0f0;transform:scaleX(1.0440);">Fondo</div>
<svg style="left:114px;top:393px;" width="16" height="16" viewBox="0 0 16 16"><path d="M8 1 V15 M1 8 H15" stroke="#f2f2f2" stroke-width="1.8"/></svg>
<svg style="left:165px;top:393px;" width="16" height="16" viewBox="0 0 16 16"><path d="M1 8 H15" stroke="#f2f2f2" stroke-width="1.8"/></svg>
<svg style="left:216px;top:393px;" width="16" height="16" viewBox="0 0 16 16"><rect x="1" y="1" width="9" height="11" fill="none" stroke="#f2f2f2" stroke-width="1.4"/><path d="M5 5 H15 V12 L12 15 H5Z" fill="#414141" stroke="#f2f2f2" stroke-width="1.4"/></svg>
<svg style="left:267px;top:393px;" width="16" height="16" viewBox="0 0 16 16"><path d="M2 11 L8 5 L14 11" stroke="#f2f2f2" stroke-width="1.8" fill="none"/></svg>
<svg style="left:318px;top:393px;" width="16" height="16" viewBox="0 0 16 16"><path d="M2 5 L8 11 L14 5" stroke="#f2f2f2" stroke-width="1.8" fill="none"/></svg>
<div style="left:0px;top:416px;width:353px;height:24px;background:#2c2c2c;"></div>
<div style="left:4px;top:416px;width:101px;height:24px;background:#1e1e1e;"></div>
<svg style="left:9px;top:421px" width="16" height="14" viewBox="0 0 16 14"><rect x="0" y="0" width="4" height="3" fill="#f2f2f2"/><path d="M2 3 V12 H5 M2 7 H5" stroke="#aaa" stroke-width="1"/><rect x="6" y="5" width="10" height="3" fill="#f2f2f2"/><rect x="6" y="10" width="10" height="3" fill="#f2f2f2"/></svg>
<div class="t" style="left:31px;top:422px;font-size:13px;color:#f4f4f4;font-weight:bold;transform:scaleX(1.0944);">Outline</div>
<svg style="left:86px;top:423px;" width="10" height="10" viewBox="0 0 10 10"><path d="M1 1 L9 9 M9 1 L1 9" stroke="#f2f2f2" stroke-width="1.4"/></svg>
<svg style="left:114px;top:420px" width="14" height="16" viewBox="0 0 14 16"><rect x="2" y="0" width="11" height="16" rx="1" fill="#f2f2f2"/><path d="M8 1 V7 L10 5.5 L12 7 V1" fill="#2c2c2c"/><path d="M1 3 H3 M1 7 H3 M1 11 H3" stroke="#2c2c2c" stroke-width="1"/></svg>
<svg style="left:155px;top:420px" width="14" height="16" viewBox="0 0 14 16"><path d="M1 0 V16" stroke="#f2f2f2" stroke-width="1.2"/><rect x="3" y="2" width="6" height="3" fill="#f2f2f2"/><rect x="3" y="6" width="10" height="3" fill="#f2f2f2"/><rect x="3" y="10" width="6" height="3" fill="#f2f2f2"/></svg>
<svg style="left:195px;top:420px" width="16" height="16" viewBox="0 0 16 16"><path d="M0 1 H2 M4 1 H12 M0 4 H2 M4 4 H12 M0 7 H2 M4 7 H12" stroke="#f2f2f2" stroke-width="1.6"/><path d="M8 12 L11 9 V11 H15 V13 H11 V15Z" fill="#f2f2f2"/></svg>
<div style="left:225px;top:419px;width:1px;height:18px;background:#3a3a3a;"></div>
<div style="left:315px;top:416px;width:34px;height:24px;background:#3f3f3f;"></div>
<svg style="left:321px;top:425px;" width="10" height="6" viewBox="0 0 10 6"><path d="M0 0 H10 L5 6Z" fill="#f2f2f2"/></svg>
<svg style="left:339px;top:420px;" width="12" height="16" viewBox="0 0 12 16"><path d="M3 0 H9 V2 H8 L9 8 L11 10 H7 V16 H5 V10 H1 L3 8 L4 2 H3Z" fill="#f2f2f2"/></svg>
<div style="left:105px;top:419px;width:1px;height:18px;background:#383838;"></div>
<div style="left:140px;top:419px;width:1px;height:18px;background:#383838;"></div>
<div style="left:180px;top:419px;width:1px;height:18px;background:#383838;"></div>
<div class="t" style="left:4px;top:449px;font-size:12.5px;color:#dedede;transform:scaleX(0.9921);">Filter:</div>
<div style="left:39px;top:443px;width:310px;height:23px;background:#3d4a5c;border:1px solid #7d8dbe;border-radius:2px"></div>
<div style="left:5px;top:470px;width:335px;height:567px;background:#47474a;"></div>
<div style="left:5px;top:470px;width:335px;height:21px;background:#474747;"></div>
<div style="left:5px;top:490px;width:335px;height:1px;background:#363636;"></div>
<div class="t" style="left:7px;top:475px;font-size:12.5px;color:#e6e6e6;transform:scaleX(1.0032);">Element</div>
<div style="left:340px;top:470px;width:9px;height:10px;background:#2a2a2a;border:1px solid #777"></div>
<div style="left:340px;top:481px;width:10px;height:556px;background:#383838;"></div>
<div style="left:341px;top:490px;width:8px;height:547px;background:#7787b0;border-radius:4px"></div>
<div class="t" style="left:48px;top:495px;font-size:12.5px;color:#e4e4e4;transform:scaleX(1.0000);">Normal</div>
<div style="left:5px;top:508px;width:335px;height:17px;background:#6d7ca8;"></div>
<svg style="left:31px;top:514px;" width="8" height="5" viewBox="0 0 8 5"><path d="M0 0 H8 L4 5Z" fill="#a0a0a0"/></svg>
<div class="t" style="left:48px;top:512px;font-size:12.5px;color:#e4e4e4;transform:scaleX(1.0000);">Page 1</div>
<svg style="left:68px;top:526px;" width="17" height="17" viewBox="0 0 17 17"><path d="M3 14 L14 3" stroke="#f2f2f2" stroke-width="1.7"/><rect x="0.5" y="12.5" width="3.5" height="3.5" fill="none" stroke="#4aa0e0" stroke-width="1"/><rect x="13" y="0.5" width="3.5" height="3.5" fill="none" stroke="#4aa0e0" stroke-width="1"/></svg>
<div class="t" style="left:90px;top:530px;font-size:12.5px;color:#e4e4e4;transform:scaleX(1.0000);">Line20</div>
<svg style="left:68px;top:546px;" width="16" height="16" viewBox="0 0 16 16"><rect x="2" y="2" width="12" height="12" fill="none" stroke="#f2f2f2" stroke-width="1.2"/><rect x="0" y="0" width="3.5" height="3.5" fill="#f2f2f2"/><rect x="12.5" y="0" width="3.5" height="3.5" fill="#f2f2f2"/><rect x="0" y="12.5" width="3.5" height="3.5" fill="#f2f2f2"/><rect x="12.5" y="12.5" width="3.5" height="3.5" fill="#f2f2f2"/><circle cx="6.5" cy="6" r="1.6" fill="#f2f2f2"/><path d="M3.5 13 L7 8.5 L9.5 11 L12.5 7 V13Z" fill="#f2f2f2"/></svg>
<div class="t" style="left:90px;top:549px;font-size:12.5px;color:#e4e4e4;transform:scaleX(1.0000);">Image_Lateral_1</div>
<svg style="left:68px;top:565px;" width="16" height="16" viewBox="0 0 16 16"><rect x="2" y="2" width="12" height="12" fill="none" stroke="#f2f2f2" stroke-width="1.2"/><rect x="0" y="0" width="3.5" height="3.5" fill="#f2f2f2"/><rect x="12.5" y="0" width="3.5" height="3.5" fill="#f2f2f2"/><rect x="0" y="12.5" width="3.5" height="3.5" fill="#f2f2f2"/><rect x="12.5" y="12.5" width="3.5" height="3.5" fill="#f2f2f2"/><circle cx="6.5" cy="6" r="1.6" fill="#f2f2f2"/><path d="M3.5 13 L7 8.5 L9.5 11 L12.5 7 V13Z" fill="#f2f2f2"/></svg>
<div class="t" style="left:90px;top:568px;font-size:12.5px;color:#e4e4e4;transform:scaleX(1.0000);">Image_Central_1</div>
<svg style="left:68px;top:584px;" width="16" height="16" viewBox="0 0 16 16"><rect x="2" y="2" width="12" height="12" fill="none" stroke="#f2f2f2" stroke-width="1.2"/><rect x="0" y="0" width="3.5" height="3.5" fill="#f2f2f2"/><rect x="12.5" y="0" width="3.5" height="3.5" fill="#f2f2f2"/><rect x="0" y="12.5" width="3.5" height="3.5" fill="#f2f2f2"/><rect x="12.5" y="12.5" width="3.5" height="3.5" fill="#f2f2f2"/><text x="4" y="12.5" font-size="11" fill="#f2f2f2" font-family="Liberation Serif">T</text></svg>
<div class="t" style="left:90px;top:587px;font-size:12.5px;color:#e4e4e4;transform:scaleX(1.0000);">Text_Central</div>
<svg style="left:68px;top:603px;" width="16" height="16" viewBox="0 0 16 16"><rect x="2" y="2" width="12" height="12" fill="none" stroke="#f2f2f2" stroke-width="1.2"/><rect x="0" y="0" width="3.5" height="3.5" fill="#f2f2f2"/><rect x="12.5" y="0" width="3.5" height="3.5" fill="#f2f2f2"/><rect x="0" y="12.5" width="3.5" height="3.5" fill="#f2f2f2"/><rect x="12.5" y="12.5" width="3.5" height="3.5" fill="#f2f2f2"/><text x="4" y="12.5" font-size="11" fill="#f2f2f2" font-family="Liberation Serif">T</text></svg>
<div class="t" style="left:90px;top:606px;font-size:12.5px;color:#e4e4e4;transform:scaleX(1.0000);">Text_Lateral</div>
<svg style="left:31px;top:626px;" width="8" height="5" viewBox="0 0 8 5"><path d="M0 0 H8 L4 5Z" fill="#a0a0a0"/></svg>
<div class="t" style="left:48px;top:624px;font-size:12.5px;color:#e4e4e4;transform:scaleX(1.0000);">Page 2</div>
<svg style="left:68px;top:638px;" width="17" height="17" viewBox="0 0 17 17"><path d="M3 14 L14 3" stroke="#f2f2f2" stroke-width="1.7"/><rect x="0.5" y="12.5" width="3.5" height="3.5" fill="none" stroke="#4aa0e0" stroke-width="1"/><rect x="13" y="0.5" width="3.5" height="3.5" fill="none" stroke="#4aa0e0" stroke-width="1"/></svg>
<div class="t" style="left:90px;top:642px;font-size:12.5px;color:#e4e4e4;transform:scaleX(1.0000);">Line35</div>
<svg style="left:68px;top:658px;" width="16" height="16" viewBox="0 0 16 16"><rect x="2" y="2" width="12" height="12" fill="none" stroke="#f2f2f2" stroke-width="1.2"/><rect x="0" y="0" width="3.5" height="3.5" fill="#f2f2f2"/><rect x="12.5" y="0" width="3.5" height="3.5" fill="#f2f2f2"/><rect x="0" y="12.5" width="3.5" height="3.5" fill="#f2f2f2"/><rect x="12.5" y="12.5" width="3.5" height="3.5" fill="#f2f2f2"/><circle cx="6.5" cy="6" r="1.6" fill="#f2f2f2"/><path d="M3.5 13 L7 8.5 L9.5 11 L12.5 7 V13Z" fill="#f2f2f2"/></svg>
<div class="t" style="left:90px;top:661px;font-size:12.5px;color:#e4e4e4;transform:scaleX(1.0000);">Copy of Image_Central_1 (2)</div>
<svg style="left:68px;top:676px;" width="17" height="17" viewBox="0 0 17 17"><path d="M3 14 L14 3" stroke="#f2f2f2" stroke-width="1.7"/><rect x="0.5" y="12.5" width="3.5" height="3.5" fill="none" stroke="#4aa0e0" stroke-width="1"/><rect x="13" y="0.5" width="3.5" height="3.5" fill="none" stroke="#4aa0e0" stroke-width="1"/></svg>
<div class="t" style="left:90px;top:680px;font-size:12.5px;color:#e4e4e4;transform:scaleX(1.0000);">Line28</div>
<svg style="left:68px;top:696px;" width="16" height="16" viewBox="0 0 16 16"><rect x="2" y="2" width="12" height="12" fill="none" stroke="#f2f2f2" stroke-width="1.2"/><rect x="0" y="0" width="3.5" height="3.5" fill="#f2f2f2"/><rect x="12.5" y="0" width="3.5" height="3.5" fill="#f2f2f2"/><rect x="0" y="12.5" width="3.5" height="3.5" fill="#f2f2f2"/><rect x="12.5" y="12.5" width="3.5" height="3.5" fill="#f2f2f2"/><circle cx="6.5" cy="6" r="1.6" fill="#f2f2f2"/><path d="M3.5 13 L7 8.5 L9.5 11 L12.5 7 V13Z" fill="#f2f2f2"/></svg>
<div class="t" style="left:90px;top:699px;font-size:12.5px;color:#e4e4e4;transform:scaleX(1.0000);">Copy of Image_Lateral_1</div>
<svg style="left:68px;top:715px;" width="16" height="16" viewBox="0 0 16 16"><rect x="2" y="2" width="12" height="12" fill="none" stroke="#f2f2f2" stroke-width="1.2"/><rect x="0" y="0" width="3.5" height="3.5" fill="#f2f2f2"/><rect x="12.5" y="0" width="3.5" height="3.5" fill="#f2f2f2"/><rect x="0" y="12.5" width="3.5" height="3.5" fill="#f2f2f2"/><rect x="12.5" y="12.5" width="3.5" height="3.5" fill="#f2f2f2"/><text x="4" y="12.5" font-size="11" fill="#f2f2f2" font-family="Liberation Serif">T</text></svg>
<div class="t" style="left:90px;top:718px;font-size:12.5px;color:#e4e4e4;transform:scaleX(1.0000);">Copy of Text_Lateral (3)</div>
<svg style="left:68px;top:733px;" width="17" height="17" viewBox="0 0 17 17"><path d="M3 14 L14 3" stroke="#f2f2f2" stroke-width="1.7"/><rect x="0.5" y="12.5" width="3.5" height="3.5" fill="none" stroke="#4aa0e0" stroke-width="1"/><rect x="13" y="0.5" width="3.5" height="3.5" fill="none" stroke="#4aa0e0" stroke-width="1"/></svg>
<div class="t" style="left:90px;top:737px;font-size:12.5px;color:#e4e4e4;transform:scaleX(1.0000);">Line_Central</div>
<svg style="left:68px;top:752px;" width="17" height="17" viewBox="0 0 17 17"><path d="M6 16 L9 8 L15 10.5 L12 15Z" fill="#f2f2f2"/><circle cx="11" cy="11.5" r="1" fill="#47474a"/><path d="M2 2 V14" stroke="#22b040" stroke-width="1.3"/><rect x="0.5" y="12" width="3" height="3" fill="none" stroke="#22b040"/><rect x="0.5" y="0.5" width="3" height="3" fill="none" stroke="#22b040"/><path d="M5 6 Q8 2 12 4" stroke="#bbb" fill="none"/></svg>
<div class="t" style="left:90px;top:756px;font-size:12.5px;color:#e4e4e4;transform:scaleX(1.0000);">Polyline_Central</div>
<svg style="left:68px;top:772px;" width="16" height="16" viewBox="0 0 16 16"><rect x="2" y="2" width="12" height="12" fill="none" stroke="#f2f2f2" stroke-width="1.2"/><rect x="0" y="0" width="3.5" height="3.5" fill="#f2f2f2"/><rect x="12.5" y="0" width="3.5" height="3.5" fill="#f2f2f2"/><rect x="0" y="12.5" width="3.5" height="3.5" fill="#f2f2f2"/><rect x="12.5" y="12.5" width="3.5" height="3.5" fill="#f2f2f2"/><text x="4" y="12.5" font-size="11" fill="#f2f2f2" font-family="Liberation Serif">T</text></svg>
<div class="t" style="left:90px;top:775px;font-size:12.5px;color:#e4e4e4;transform:scaleX(1.0000);">Copy of Text_Central</div>
<div class="t" style="left:48px;top:793px;font-size:12.5px;color:#e4e4e4;transform:scaleX(1.0000);">Page 3</div>
<div class="t" style="left:48px;top:810px;font-size:12.5px;color:#e4e4e4;transform:scaleX(1.0000);">Page 4</div>
<div class="t" style="left:48px;top:827px;font-size:12.5px;color:#e4e4e4;transform:scaleX(1.0000);">Page 5</div>
<svg style="left:31px;top:846px;" width="8" height="5" viewBox="0 0 8 5"><path d="M0 0 H8 L4 5Z" fill="#a0a0a0"/></svg>
<div class="t" style="left:48px;top:844px;font-size:12.5px;color:#e4e4e4;transform:scaleX(1.0000);">Free Objects</div>
<svg style="left:68px;top:859px;" width="16" height="16" viewBox="0 0 16 16"><rect x="2" y="2" width="12" height="12" fill="none" stroke="#f2f2f2" stroke-width="1.2"/><rect x="0" y="0" width="3.5" height="3.5" fill="#f2f2f2"/><rect x="12.5" y="0" width="3.5" height="3.5" fill="#f2f2f2"/><rect x="0" y="12.5" width="3.5" height="3.5" fill="#f2f2f2"/><rect x="12.5" y="12.5" width="3.5" height="3.5" fill="#f2f2f2"/><text x="4" y="12.5" font-size="11" fill="#f2f2f2" font-family="Liberation Serif">T</text></svg>
<div class="t" style="left:90px;top:862px;font-size:12.5px;color:#e4e4e4;transform:scaleX(1.0000);">Comentario (7)</div>
<svg style="left:68px;top:877px;" width="17" height="17" viewBox="0 0 17 17"><path d="M3 14 L14 3" stroke="#f2f2f2" stroke-width="1.7"/><rect x="0.5" y="12.5" width="3.5" height="3.5" fill="none" stroke="#4aa0e0" stroke-width="1"/><rect x="13" y="0.5" width="3.5" height="3.5" fill="none" stroke="#4aa0e0" stroke-width="1"/></svg>
<div class="t" style="left:90px;top:881px;font-size:12.5px;color:#e4e4e4;transform:scaleX(1.0000);">Line32</div>
<svg style="left:68px;top:897px;" width="16" height="16" viewBox="0 0 16 16"><rect x="2" y="2" width="12" height="12" fill="none" stroke="#f2f2f2" stroke-width="1.2"/><rect x="0" y="0" width="3.5" height="3.5" fill="#f2f2f2"/><rect x="12.5" y="0" width="3.5" height="3.5" fill="#f2f2f2"/><rect x="0" y="12.5" width="3.5" height="3.5" fill="#f2f2f2"/><rect x="12.5" y="12.5" width="3.5" height="3.5" fill="#f2f2f2"/><text x="4" y="12.5" font-size="11" fill="#f2f2f2" font-family="Liberation Serif">T</text></svg>
<div class="t" style="left:90px;top:900px;font-size:12.5px;color:#e4e4e4;transform:scaleX(1.0000);">Comentario(6)</div>
<svg style="left:68px;top:915px;" width="17" height="17" viewBox="0 0 17 17"><path d="M3 14 L14 3" stroke="#f2f2f2" stroke-width="1.7"/><rect x="0.5" y="12.5" width="3.5" height="3.5" fill="none" stroke="#4aa0e0" stroke-width="1"/><rect x="13" y="0.5" width="3.5" height="3.5" fill="none" stroke="#4aa0e0" stroke-width="1"/></svg>
<div class="t" style="left:90px;top:919px;font-size:12.5px;color:#e4e4e4;transform:scaleX(1.0000);">Line30</div>
<svg style="left:68px;top:935px;" width="16" height="16" viewBox="0 0 16 16"><rect x="2" y="2" width="12" height="12" fill="none" stroke="#f2f2f2" stroke-width="1.2"/><rect x="0" y="0" width="3.5" height="3.5" fill="#f2f2f2"/><rect x="12.5" y="0" width="3.5" height="3.5" fill="#f2f2f2"/><rect x="0" y="12.5" width="3.5" height="3.5" fill="#f2f2f2"/><rect x="12.5" y="12.5" width="3.5" height="3.5" fill="#f2f2f2"/><text x="4" y="12.5" font-size="11" fill="#f2f2f2" font-family="Liberation Serif">T</text></svg>
<div class="t" style="left:90px;top:938px;font-size:12.5px;color:#e4e4e4;transform:scaleX(1.0000);">Comentario (5)</div>
<svg style="left:68px;top:954px;" width="16" height="16" viewBox="0 0 16 16"><rect x="2" y="2" width="12" height="12" fill="none" stroke="#f2f2f2" stroke-width="1.2"/><rect x="0" y="0" width="3.5" height="3.5" fill="#f2f2f2"/><rect x="12.5" y="0" width="3.5" height="3.5" fill="#f2f2f2"/><rect x="0" y="12.5" width="3.5" height="3.5" fill="#f2f2f2"/><rect x="12.5" y="12.5" width="3.5" height="3.5" fill="#f2f2f2"/><text x="4" y="12.5" font-size="11" fill="#f2f2f2" font-family="Liberation Serif">T</text></svg>
<div class="t" style="left:90px;top:957px;font-size:12.5px;color:#e4e4e4;transform:scaleX(1.0000);">Comentario (4)</div>
<svg style="left:68px;top:972px;" width="17" height="17" viewBox="0 0 17 17"><path d="M3 14 L14 3" stroke="#f2f2f2" stroke-width="1.7"/><rect x="0.5" y="12.5" width="3.5" height="3.5" fill="none" stroke="#4aa0e0" stroke-width="1"/><rect x="13" y="0.5" width="3.5" height="3.5" fill="none" stroke="#4aa0e0" stroke-width="1"/></svg>
<div class="t" style="left:90px;top:976px;font-size:12.5px;color:#e4e4e4;transform:scaleX(1.0000);">Line22</div>
<svg style="left:68px;top:992px;" width="16" height="16" viewBox="0 0 16 16"><rect x="2" y="2" width="12" height="12" fill="none" stroke="#f2f2f2" stroke-width="1.2"/><rect x="0" y="0" width="3.5" height="3.5" fill="#f2f2f2"/><rect x="12.5" y="0" width="3.5" height="3.5" fill="#f2f2f2"/><rect x="0" y="12.5" width="3.5" height="3.5" fill="#f2f2f2"/><rect x="12.5" y="12.5" width="3.5" height="3.5" fill="#f2f2f2"/><text x="4" y="12.5" font-size="11" fill="#f2f2f2" font-family="Liberation Serif">T</text></svg>
<div class="t" style="left:90px;top:995px;font-size:12.5px;color:#e4e4e4;transform:scaleX(1.0000);">Comentario (2)</div>
<svg style="left:68px;top:1011px;" width="16" height="16" viewBox="0 0 16 16"><rect x="2" y="2" width="12" height="12" fill="none" stroke="#f2f2f2" stroke-width="1.2"/><rect x="0" y="0" width="3.5" height="3.5" fill="#f2f2f2"/><rect x="12.5" y="0" width="3.5" height="3.5" fill="#f2f2f2"/><rect x="0" y="12.5" width="3.5" height="3.5" fill="#f2f2f2"/><rect x="12.5" y="12.5" width="3.5" height="3.5" fill="#f2f2f2"/><text x="4" y="12.5" font-size="11" fill="#f2f2f2" font-family="Liberation Serif">T</text></svg>
<div class="t" style="left:90px;top:1014px;font-size:12.5px;color:#e4e4e4;transform:scaleX(1.0000);">Comentario</div>
<div style="left:0px;top:1042px;width:349px;height:1px;background:#262626;"></div>
<svg style="left:356px;top:78px;" width="1133" height="26" viewBox="0 0 1133 26"><rect x="27" y="14" width="1" height="12" fill="#ececec"/><rect x="40" y="22" width="1" height="4" fill="#ececec"/><rect x="53" y="22" width="1" height="4" fill="#ececec"/><rect x="66" y="22" width="1" height="4" fill="#ececec"/><rect x="79" y="22" width="1" height="4" fill="#ececec"/><rect x="92" y="19" width="1" height="7" fill="#ececec"/><rect x="105" y="22" width="1" height="4" fill="#ececec"/><rect x="118" y="22" width="1" height="4" fill="#ececec"/><rect x="131" y="22" width="1" height="4" fill="#ececec"/><rect x="144" y="22" width="1" height="4" fill="#ececec"/><rect x="157" y="14" width="1" height="12" fill="#ececec"/><rect x="169" y="22" width="1" height="4" fill="#ececec"/><rect x="182" y="22" width="1" height="4" fill="#ececec"/><rect x="195" y="22" width="1" height="4" fill="#ececec"/><rect x="208" y="22" width="1" height="4" fill="#ececec"/><rect x="221" y="19" width="1" height="7" fill="#ececec"/><rect x="234" y="22" width="1" height="4" fill="#ececec"/><rect x="247" y="22" width="1" height="4" fill="#ececec"/><rect x="260" y="22" width="1" height="4" fill="#ececec"/><rect x="273" y="22" width="1" height="4" fill="#ececec"/><rect x="286" y="14" width="1" height="12" fill="#ececec"/><rect x="299" y="22" width="1" height="4" fill="#ececec"/><rect x="312" y="22" width="1" height="4" fill="#ececec"/><rect x="325" y="22" width="1" height="4" fill="#ececec"/><rect x="338" y="22" width="1" height="4" fill="#ececec"/><rect x="351" y="19" width="1" height="7" fill="#ececec"/><rect x="364" y="22" width="1" height="4" fill="#ececec"/><rect x="377" y="22" width="1" height="4" fill="#ececec"/><rect x="390" y="22" width="1" height="4" fill="#ececec"/><rect x="403" y="22" width="1" height="4" fill="#ececec"/><rect x="416" y="14" width="1" height="12" fill="#ececec"/><rect x="428" y="22" width="1" height="4" fill="#ececec"/><rect x="441" y="22" width="1" height="4" fill="#ececec"/><rect x="454" y="22" width="1" height="4" fill="#ececec"/><rect x="467" y="22" width="1" height="4" fill="#ececec"/><rect x="480" y="19" width="1" height="7" fill="#ececec"/><rect x="493" y="22" width="1" height="4" fill="#ececec"/><rect x="506" y="22" width="1" height="4" fill="#ececec"/><rect x="519" y="22" width="1" height="4" fill="#ececec"/><rect x="532" y="22" width="1" height="4" fill="#ececec"/><rect x="545" y="14" width="1" height="12" fill="#ececec"/><rect x="558" y="22" width="1" height="4" fill="#ececec"/><rect x="571" y="22" width="1" height="4" fill="#ececec"/><rect x="584" y="22" width="1" height="4" fill="#ececec"/><rect x="597" y="22" width="1" height="4" fill="#ececec"/><rect x="610" y="19" width="1" height="7" fill="#ececec"/><rect x="623" y="22" width="1" height="4" fill="#ececec"/><rect x="636" y="22" width="1" height="4" fill="#ececec"/><rect x="649" y="22" width="1" height="4" fill="#ececec"/><rect x="662" y="22" width="1" height="4" fill="#ececec"/><rect x="675" y="14" width="1" height="12" fill="#ececec"/><rect x="687" y="22" width="1" height="4" fill="#ececec"/><rect x="700" y="22" width="1" height="4" fill="#ececec"/><rect x="713" y="22" width="1" height="4" fill="#ececec"/><rect x="726" y="22" width="1" height="4" fill="#ececec"/><rect x="739" y="19" width="1" height="7" fill="#ececec"/><rect x="752" y="22" width="1" height="4" fill="#ececec"/><rect x="765" y="22" width="1" height="4" fill="#ececec"/><rect x="778" y="22" width="1" height="4" fill="#ececec"/><rect x="791" y="22" width="1" height="4" fill="#ececec"/><rect x="804" y="14" width="1" height="12" fill="#ececec"/><rect x="817" y="22" width="1" height="4" fill="#ececec"/><rect x="830" y="22" width="1" height="4" fill="#ececec"/><rect x="843" y="22" width="1" height="4" fill="#ececec"/><rect x="856" y="22" width="1" height="4" fill="#ececec"/><rect x="869" y="19" width="1" height="7" fill="#ececec"/><rect x="882" y="22" width="1" height="4" fill="#ececec"/><rect x="895" y="22" width="1" height="4" fill="#ececec"/><rect x="908" y="22" width="1" height="4" fill="#ececec"/><rect x="921" y="22" width="1" height="4" fill="#ececec"/><rect x="934" y="14" width="1" height="12" fill="#ececec"/><rect x="946" y="22" width="1" height="4" fill="#ececec"/><rect x="959" y="22" width="1" height="4" fill="#ececec"/><rect x="972" y="22" width="1" height="4" fill="#ececec"/><rect x="985" y="22" width="1" height="4" fill="#ececec"/><rect x="998" y="19" width="1" height="7" fill="#ececec"/><rect x="1011" y="22" width="1" height="4" fill="#ececec"/><rect x="1024" y="22" width="1" height="4" fill="#ececec"/><rect x="1037" y="22" width="1" height="4" fill="#ececec"/><rect x="1050" y="22" width="1" height="4" fill="#ececec"/><rect x="1063" y="14" width="1" height="12" fill="#ececec"/><rect x="1076" y="22" width="1" height="4" fill="#ececec"/><rect x="1089" y="22" width="1" height="4" fill="#ececec"/><rect x="1102" y="22" width="1" height="4" fill="#ececec"/><rect x="1115" y="22" width="1" height="4" fill="#ececec"/><rect x="1128" y="19" width="1" height="7" fill="#ececec"/><rect x="1006.5" y="2" width="1" height="24" fill="#e06060"/><path d="M1003.5 1 H1010.5 L1007 5Z" fill="#e06060"/></svg>
<div class="t" style="left:386px;top:82px;font-size:12px;color:#e4e4e4;transform:scaleX(0.9500);">-300</div>
<div class="t" style="left:515px;top:82px;font-size:12px;color:#e4e4e4;transform:scaleX(0.9500);">-200</div>
<div class="t" style="left:644px;top:82px;font-size:12px;color:#e4e4e4;transform:scaleX(0.9500);">-100</div>
<div class="t" style="left:775px;top:82px;font-size:12px;color:#e4e4e4;transform:scaleX(0.9500);">0</div>
<div class="t" style="left:905px;top:82px;font-size:12px;color:#e4e4e4;transform:scaleX(0.9500);">100</div>
<div class="t" style="left:1034px;top:82px;font-size:12px;color:#e4e4e4;transform:scaleX(0.9500);">200</div>
<div class="t" style="left:1163px;top:82px;font-size:12px;color:#e4e4e4;transform:scaleX(0.9500);">300</div>
<div class="t" style="left:1293px;top:82px;font-size:12px;color:#e4e4e4;transform:scaleX(0.9500);">400</div>
<div class="t" style="left:1423px;top:82px;font-size:12px;color:#e4e4e4;transform:scaleX(0.9500);">500</div>
<svg style="left:356px;top:104px;" width="24" height="939" viewBox="0 0 24 939"><rect x="16" y="8" width="8" height="1" fill="#ececec"/><rect x="20" y="21" width="4" height="1" fill="#ececec"/><rect x="20" y="34" width="4" height="1" fill="#ececec"/><rect x="20" y="47" width="4" height="1" fill="#ececec"/><rect x="20" y="60" width="4" height="1" fill="#ececec"/><rect x="12" y="73" width="12" height="1" fill="#ececec"/><rect x="20" y="85" width="4" height="1" fill="#ececec"/><rect x="20" y="98" width="4" height="1" fill="#ececec"/><rect x="20" y="111" width="4" height="1" fill="#ececec"/><rect x="20" y="124" width="4" height="1" fill="#ececec"/><rect x="16" y="137" width="8" height="1" fill="#ececec"/><rect x="20" y="150" width="4" height="1" fill="#ececec"/><rect x="20" y="163" width="4" height="1" fill="#ececec"/><rect x="20" y="176" width="4" height="1" fill="#ececec"/><rect x="20" y="189" width="4" height="1" fill="#ececec"/><rect x="12" y="202" width="12" height="1" fill="#ececec"/><rect x="20" y="215" width="4" height="1" fill="#ececec"/><rect x="20" y="228" width="4" height="1" fill="#ececec"/><rect x="20" y="241" width="4" height="1" fill="#ececec"/><rect x="20" y="254" width="4" height="1" fill="#ececec"/><rect x="16" y="267" width="8" height="1" fill="#ececec"/><rect x="20" y="280" width="4" height="1" fill="#ececec"/><rect x="20" y="293" width="4" height="1" fill="#ececec"/><rect x="20" y="306" width="4" height="1" fill="#ececec"/><rect x="20" y="319" width="4" height="1" fill="#ececec"/><rect x="12" y="332" width="12" height="1" fill="#ececec"/><rect x="20" y="344" width="4" height="1" fill="#ececec"/><rect x="20" y="357" width="4" height="1" fill="#ececec"/><rect x="20" y="370" width="4" height="1" fill="#ececec"/><rect x="20" y="383" width="4" height="1" fill="#ececec"/><rect x="16" y="396" width="8" height="1" fill="#ececec"/><rect x="20" y="409" width="4" height="1" fill="#ececec"/><rect x="20" y="422" width="4" height="1" fill="#ececec"/><rect x="20" y="435" width="4" height="1" fill="#ececec"/><rect x="20" y="448" width="4" height="1" fill="#ececec"/><rect x="12" y="461" width="12" height="1" fill="#ececec"/><rect x="20" y="474" width="4" height="1" fill="#ececec"/><rect x="20" y="487" width="4" height="1" fill="#ececec"/><rect x="20" y="500" width="4" height="1" fill="#ececec"/><rect x="20" y="513" width="4" height="1" fill="#ececec"/><rect x="16" y="526" width="8" height="1" fill="#ececec"/><rect x="20" y="539" width="4" height="1" fill="#ececec"/><rect x="20" y="552" width="4" height="1" fill="#ececec"/><rect x="20" y="565" width="4" height="1" fill="#ececec"/><rect x="20" y="578" width="4" height="1" fill="#ececec"/><rect x="12" y="591" width="12" height="1" fill="#ececec"/><rect x="20" y="603" width="4" height="1" fill="#ececec"/><rect x="20" y="616" width="4" height="1" fill="#ececec"/><rect x="20" y="629" width="4" height="1" fill="#ececec"/><rect x="20" y="642" width="4" height="1" fill="#ececec"/><rect x="16" y="655" width="8" height="1" fill="#ececec"/><rect x="20" y="668" width="4" height="1" fill="#ececec"/><rect x="20" y="681" width="4" height="1" fill="#ececec"/><rect x="20" y="694" width="4" height="1" fill="#ececec"/><rect x="20" y="707" width="4" height="1" fill="#ececec"/><rect x="12" y="720" width="12" height="1" fill="#ececec"/><rect x="20" y="733" width="4" height="1" fill="#ececec"/><rect x="20" y="746" width="4" height="1" fill="#ececec"/><rect x="20" y="759" width="4" height="1" fill="#ececec"/><rect x="20" y="772" width="4" height="1" fill="#ececec"/><rect x="16" y="785" width="8" height="1" fill="#ececec"/><rect x="20" y="798" width="4" height="1" fill="#ececec"/><rect x="20" y="811" width="4" height="1" fill="#ececec"/><rect x="20" y="824" width="4" height="1" fill="#ececec"/><rect x="20" y="837" width="4" height="1" fill="#ececec"/><rect x="12" y="850" width="12" height="1" fill="#ececec"/><rect x="20" y="862" width="4" height="1" fill="#ececec"/><rect x="20" y="875" width="4" height="1" fill="#ececec"/><rect x="20" y="888" width="4" height="1" fill="#ececec"/><rect x="20" y="901" width="4" height="1" fill="#ececec"/><rect x="16" y="914" width="8" height="1" fill="#ececec"/><rect x="20" y="927" width="4" height="1" fill="#ececec"/><rect x="4" y="456" width="20" height="1" fill="#e06060"/><path d="M2 452.5 V459.5 L6 456Z" fill="#e06060"/></svg>
<div class="t" style="left:361px;top:176.0px;font-size:12px;color:#e4e4e4;">0</div>
<div class="t" style="left:361px;top:305.0px;font-size:12px;color:#e4e4e4;">1</div>
<div class="t" style="left:361px;top:316.7px;font-size:12px;color:#e4e4e4;">0</div>
<div class="t" style="left:361px;top:328.4px;font-size:12px;color:#e4e4e4;">0</div>
<div class="t" style="left:361px;top:435.0px;font-size:12px;color:#e4e4e4;">2</div>
<div class="t" style="left:361px;top:446.7px;font-size:12px;color:#e4e4e4;">0</div>
<div class="t" style="left:361px;top:458.4px;font-size:12px;color:#e4e4e4;">0</div>
<div class="t" style="left:361px;top:565.0px;font-size:12px;color:#e4e4e4;">3</div>
<div class="t" style="left:361px;top:576.7px;font-size:12px;color:#e4e4e4;">0</div>
<div class="t" style="left:361px;top:588.4px;font-size:12px;color:#e4e4e4;">0</div>
<div class="t" style="left:361px;top:694.0px;font-size:12px;color:#e4e4e4;">4</div>
<div class="t" style="left:361px;top:705.7px;font-size:12px;color:#e4e4e4;">0</div>
<div class="t" style="left:361px;top:717.4px;font-size:12px;color:#e4e4e4;">0</div>
<div class="t" style="left:361px;top:823.0px;font-size:12px;color:#e4e4e4;">5</div>
<div class="t" style="left:361px;top:834.7px;font-size:12px;color:#e4e4e4;">0</div>
<div class="t" style="left:361px;top:846.4px;font-size:12px;color:#e4e4e4;">0</div>
<div class="t" style="left:361px;top:953.0px;font-size:12px;color:#e4e4e4;">6</div>
<div class="t" style="left:361px;top:964.7px;font-size:12px;color:#e4e4e4;">0</div>
<div class="t" style="left:361px;top:976.4px;font-size:12px;color:#e4e4e4;">0</div>
<div style="left:774px;top:179px;width:274px;height:386px;background:#8e8e96;"></div>
<div style="left:772px;top:177px;width:274px;height:386px;background:#fbfbfd;border:1px solid #c00000"></div>
<div style="left:774px;top:582px;width:274px;height:386px;background:#8e8e96;"></div>
<div style="left:772px;top:580px;width:274px;height:386px;background:#fbfbfd;border:1px solid #000"></div>
<div style="left:774px;top:985px;width:274px;height:58px;background:#9a9a9a;"></div>
<div style="left:772px;top:983px;width:274px;height:60px;background:#fbfbfd;border:1px solid #000;border-bottom:none"></div>
<div style="left:790px;top:1001px;width:237px;height:42px;background:transparent;border:1px solid #1010c0;border-bottom:none"></div>
<div style="left:790px;top:195px;width:73px;height:349px;background:#7ec4d8;border:1px solid #000"></div>
<div style="left:790px;top:464px;width:73px;height:80px;background:#f0ae36;border:1px solid #000"></div>
<svg style="left:790px;top:464px;" width="73" height="80" viewBox="0 0 73 80"><path d="M1 1 L72 79 M72 1 L1 79" stroke="#5a3000" stroke-width="1" fill="none"/></svg>
<div style="left:870px;top:195px;width:157px;height:79px;background:#f0ae36;border:1px solid #000"></div>
<svg style="left:870px;top:195px;" width="157" height="79" viewBox="0 0 157 79"><path d="M1 1 L156 78 M156 1 L1 78" stroke="#5a3000" stroke-width="1" fill="none"/></svg>
<div style="left:870px;top:273px;width:157px;height:271px;background:#7ec4d8;border:1px solid #000"></div>
<div style="left:863px;top:543px;width:7px;height:1px;background:#1010c0;"></div>
<div style="left:790px;top:598px;width:73px;height:349px;background:#7ec4d8;border:1px solid #000"></div>
<div style="left:790px;top:867px;width:73px;height:80px;background:#f0ae36;border:1px solid #000"></div>
<svg style="left:790px;top:867px;" width="73" height="80" viewBox="0 0 73 80"><path d="M1 1 L72 79 M72 1 L1 79" stroke="#5a3000" stroke-width="1" fill="none"/></svg>
<div style="left:870px;top:598px;width:157px;height:79px;background:#f0ae36;border:1px solid #000"></div>
<svg style="left:870px;top:598px;" width="157" height="79" viewBox="0 0 157 79"><path d="M1 1 L156 78 M156 1 L1 78" stroke="#5a3000" stroke-width="1" fill="none"/></svg>
<div style="left:870px;top:676px;width:157px;height:271px;background:#7ec4d8;border:1px solid #000"></div>
<div style="left:863px;top:946px;width:7px;height:1px;background:#1010c0;"></div>
<div style="left:726px;top:304px;width:200px;text-align:center;font-size:11px;line-height:13px;color:#1c1c1c;letter-spacing:0.1px"><div style="position:static;white-space:nowrap">The<i style="display:inline-block;width:3px;height:3px;border:1px solid #b89898;border-radius:50%;margin:0 0.2px;vertical-align:2px"></i>name<i style="display:inline-block;width:3px;height:3px;border:1px solid #b89898;border-radius:50%;margin:0 0.2px;vertical-align:2px"></i>of<i style="display:inline-block;width:3px;height:3px;border:1px solid #b89898;border-radius:50%;margin:0 0.2px;vertical-align:2px"></i></div><div style="position:static;white-space:nowrap">this<i style="display:inline-block;width:3px;height:3px;border:1px solid #b89898;border-radius:50%;margin:0 0.2px;vertical-align:2px"></i>text<i style="display:inline-block;width:3px;height:3px;border:1px solid #b89898;border-radius:50%;margin:0 0.2px;vertical-align:2px"></i></div><div style="position:static;white-space:nowrap">frame<i style="display:inline-block;width:3px;height:3px;border:1px solid #b89898;border-radius:50%;margin:0 0.2px;vertical-align:2px"></i>is:<i style="display:inline-block;width:3px;height:3px;border:1px solid #b89898;border-radius:50%;margin:0 0.2px;vertical-align:2px"></i></div><div style="position:static;white-space:nowrap"><b>Text_Lateral</b><b style="color:#7a0000;font-weight:bold">¶</b></div></div>
<div style="left:848px;top:397px;width:200px;text-align:center;font-size:11px;line-height:11px;color:#1c1c1c;letter-spacing:0.1px"><div style="position:static;white-space:nowrap">The<i style="display:inline-block;width:3px;height:3px;border:1px solid #b89898;border-radius:50%;margin:0 0.2px;vertical-align:2px"></i>name<i style="display:inline-block;width:3px;height:3px;border:1px solid #b89898;border-radius:50%;margin:0 0.2px;vertical-align:2px"></i>of<i style="display:inline-block;width:3px;height:3px;border:1px solid #b89898;border-radius:50%;margin:0 0.2px;vertical-align:2px"></i>this<i style="display:inline-block;width:3px;height:3px;border:1px solid #b89898;border-radius:50%;margin:0 0.2px;vertical-align:2px"></i>text<i style="display:inline-block;width:3px;height:3px;border:1px solid #b89898;border-radius:50%;margin:0 0.2px;vertical-align:2px"></i>frame<i style="display:inline-block;width:3px;height:3px;border:1px solid #b89898;border-radius:50%;margin:0 0.2px;vertical-align:2px"></i>is:<i style="display:inline-block;width:3px;height:3px;border:1px solid #b89898;border-radius:50%;margin:0 0.2px;vertical-align:2px"></i></div><div style="position:static;white-space:nowrap"><b>Text_Central</b></div></div>
<div style="left:726px;top:694px;width:200px;text-align:center;font-size:11px;line-height:13px;color:#1c1c1c;letter-spacing:0.1px"><div style="position:static;white-space:nowrap">The<i style="display:inline-block;width:3px;height:3px;border:1px solid #b89898;border-radius:50%;margin:0 0.2px;vertical-align:2px"></i>name<i style="display:inline-block;width:3px;height:3px;border:1px solid #b89898;border-radius:50%;margin:0 0.2px;vertical-align:2px"></i>of<i style="display:inline-block;width:3px;height:3px;border:1px solid #b89898;border-radius:50%;margin:0 0.2px;vertical-align:2px"></i></div><div style="position:static;white-space:nowrap">this<i style="display:inline-block;width:3px;height:3px;border:1px solid #b89898;border-radius:50%;margin:0 0.2px;vertical-align:2px"></i>text<i style="display:inline-block;width:3px;height:3px;border:1px solid #b89898;border-radius:50%;margin:0 0.2px;vertical-align:2px"></i></div><div style="position:static;white-space:nowrap">frame<i style="display:inline-block;width:3px;height:3px;border:1px solid #b89898;border-radius:50%;margin:0 0.2px;vertical-align:2px"></i>is:<i style="display:inline-block;width:3px;height:3px;border:1px solid #b89898;border-radius:50%;margin:0 0.2px;vertical-align:2px"></i></div><div style="position:static;white-space:nowrap"><b>Copy<i style="display:inline-block;width:3px;height:3px;border:1px solid #b89898;border-radius:50%;margin:0 0.2px;vertical-align:2px"></i>of<i style="display:inline-block;width:3px;height:3px;border:1px solid #b89898;border-radius:50%;margin:0 0.2px;vertical-align:2px"></i></b></div><div style="position:static;white-space:nowrap"><b>Text_Lateral<i style="display:inline-block;width:3px;height:3px;border:1px solid #b89898;border-radius:50%;margin:0 0.2px;vertical-align:2px"></i></b></div><div style="position:static;white-space:nowrap"><b>(3)</b><b style="color:#7a0000;font-weight:bold">¶</b></div></div>
<div style="left:848px;top:800px;width:200px;text-align:center;font-size:11px;line-height:11px;color:#1c1c1c;letter-spacing:0.1px"><div style="position:static;white-space:nowrap">The<i style="display:inline-block;width:3px;height:3px;border:1px solid #b89898;border-radius:50%;margin:0 0.2px;vertical-align:2px"></i>name<i style="display:inline-block;width:3px;height:3px;border:1px solid #b89898;border-radius:50%;margin:0 0.2px;vertical-align:2px"></i>of<i style="display:inline-block;width:3px;height:3px;border:1px solid #b89898;border-radius:50%;margin:0 0.2px;vertical-align:2px"></i>this<i style="display:inline-block;width:3px;height:3px;border:1px solid #b89898;border-radius:50%;margin:0 0.2px;vertical-align:2px"></i>text<i style="display:inline-block;width:3px;height:3px;border:1px solid #b89898;border-radius:50%;margin:0 0.2px;vertical-align:2px"></i>frame<i style="display:inline-block;width:3px;height:3px;border:1px solid #b89898;border-radius:50%;margin:0 0.2px;vertical-align:2px"></i>is:<i style="display:inline-block;width:3px;height:3px;border:1px solid #b89898;border-radius:50%;margin:0 0.2px;vertical-align:2px"></i></div><div style="position:static;white-space:nowrap"><b>Copy<i style="display:inline-block;width:3px;height:3px;border:1px solid #b89898;border-radius:50%;margin:0 0.2px;vertical-align:2px"></i>of<i style="display:inline-block;width:3px;height:3px;border:1px solid #b89898;border-radius:50%;margin:0 0.2px;vertical-align:2px"></i>Text_Central</b></div></div>
<svg style="left:870px;top:758px;" width="157" height="7" viewBox="0 0 157 7"><rect x="3.0" y="1" width="4" height="4" fill="#f06868"/><rect x="11.6" y="1" width="4" height="4" fill="#f06868"/><rect x="20.1" y="1" width="4" height="4" fill="#f06868"/><rect x="28.7" y="1" width="4" height="4" fill="#f06868"/><rect x="37.2" y="1" width="4" height="4" fill="#f06868"/><rect x="45.8" y="1" width="4" height="4" fill="#f06868"/><rect x="54.3" y="1" width="4" height="4" fill="#f06868"/><rect x="62.9" y="1" width="4" height="4" fill="#f06868"/><rect x="71.4" y="1" width="4" height="4" fill="#f06868"/><rect x="80.0" y="1" width="4" height="4" fill="#f06868"/><rect x="88.5" y="1" width="4" height="4" fill="#f06868"/><rect x="97.1" y="1" width="4" height="4" fill="#f06868"/><rect x="105.6" y="1" width="4" height="4" fill="#f06868"/><rect x="114.2" y="1" width="4" height="4" fill="#f06868"/><rect x="122.7" y="1" width="4" height="4" fill="#f06868"/><rect x="131.2" y="1" width="4" height="4" fill="#f06868"/><rect x="139.8" y="1" width="4" height="4" fill="#f06868"/><rect x="148.4" y="1" width="4" height="4" fill="#f06868"/></svg>
<svg style="left:855px;top:850px;" width="180" height="70" viewBox="0 0 180 70"><path d="M63 11 L103 12 L110 18 L102 43 L104 51 L155 30 L169 62" stroke="#f06a6a" stroke-width="6" fill="none" stroke-linejoin="round" stroke-linecap="round"/><path d="M105 15 L9 53 L150 61" stroke="#f06a6a" stroke-width="6" fill="none" stroke-linejoin="round" stroke-linecap="butt"/><path d="M60 8 L68 5 L70 12 Z" fill="#f06a6a"/></svg>
<div style="left:1098px;top:138px;width:135px;height:69px;background:#dcdedc;border:1.5px solid #000"></div>
<div style="left:1065px;top:160px;width:200px;text-align:center;font-size:11px;line-height:13px;color:#222;letter-spacing:0.1px"><div style="position:static;white-space:nowrap">The<i style="display:inline-block;width:3px;height:3px;border:1px solid #b89898;border-radius:50%;margin:0 0.2px;vertical-align:2px"></i>name<i style="display:inline-block;width:3px;height:3px;border:1px solid #b89898;border-radius:50%;margin:0 0.2px;vertical-align:2px"></i>of<i style="display:inline-block;width:3px;height:3px;border:1px solid #b89898;border-radius:50%;margin:0 0.2px;vertical-align:2px"></i>this<i style="display:inline-block;width:3px;height:3px;border:1px solid #b89898;border-radius:50%;margin:0 0.2px;vertical-align:2px"></i>image<i style="display:inline-block;width:3px;height:3px;border:1px solid #b89898;border-radius:50%;margin:0 0.2px;vertical-align:2px"></i></div><div style="position:static;white-space:nowrap">frame<i style="display:inline-block;width:3px;height:3px;border:1px solid #b89898;border-radius:50%;margin:0 0.2px;vertical-align:2px"></i>is:<i style="display:inline-block;width:3px;height:3px;border:1px solid #b89898;border-radius:50%;margin:0 0.2px;vertical-align:2px"></i><b>Image_Central</b><b style="color:#7a0000;font-weight:bold">¶</b></div></div>
<div style="left:577px;top:408px;width:135px;height:69px;background:#dcdedc;border:1.5px solid #000"></div>
<div style="left:544px;top:430px;width:200px;text-align:center;font-size:11px;line-height:13px;color:#222;letter-spacing:0.1px"><div style="position:static;white-space:nowrap">The<i style="display:inline-block;width:3px;height:3px;border:1px solid #b89898;border-radius:50%;margin:0 0.2px;vertical-align:2px"></i>name<i style="display:inline-block;width:3px;height:3px;border:1px solid #b89898;border-radius:50%;margin:0 0.2px;vertical-align:2px"></i>of<i style="display:inline-block;width:3px;height:3px;border:1px solid #b89898;border-radius:50%;margin:0 0.2px;vertical-align:2px"></i>this<i style="display:inline-block;width:3px;height:3px;border:1px solid #b89898;border-radius:50%;margin:0 0.2px;vertical-align:2px"></i>image<i style="display:inline-block;width:3px;height:3px;border:1px solid #b89898;border-radius:50%;margin:0 0.2px;vertical-align:2px"></i></div><div style="position:static;white-space:nowrap">frame<i style="display:inline-block;width:3px;height:3px;border:1px solid #b89898;border-radius:50%;margin:0 0.2px;vertical-align:2px"></i>is:<i style="display:inline-block;width:3px;height:3px;border:1px solid #b89898;border-radius:50%;margin:0 0.2px;vertical-align:2px"></i><b>Image_Lateral</b><b style="color:#7a0000;font-weight:bold">¶</b></div></div>
<div style="left:1101px;top:522px;width:135px;height:69px;background:#dcdedc;border:1.5px solid #000"></div>
<div style="left:1068px;top:537px;width:200px;text-align:center;font-size:11px;line-height:13px;color:#222;letter-spacing:0.1px"><div style="position:static;white-space:nowrap">The<i style="display:inline-block;width:3px;height:3px;border:1px solid #b89898;border-radius:50%;margin:0 0.2px;vertical-align:2px"></i>name<i style="display:inline-block;width:3px;height:3px;border:1px solid #b89898;border-radius:50%;margin:0 0.2px;vertical-align:2px"></i>of<i style="display:inline-block;width:3px;height:3px;border:1px solid #b89898;border-radius:50%;margin:0 0.2px;vertical-align:2px"></i>this<i style="display:inline-block;width:3px;height:3px;border:1px solid #b89898;border-radius:50%;margin:0 0.2px;vertical-align:2px"></i>image<i style="display:inline-block;width:3px;height:3px;border:1px solid #b89898;border-radius:50%;margin:0 0.2px;vertical-align:2px"></i></div><div style="position:static;white-space:nowrap">frame<i style="display:inline-block;width:3px;height:3px;border:1px solid #b89898;border-radius:50%;margin:0 0.2px;vertical-align:2px"></i>is:<i style="display:inline-block;width:3px;height:3px;border:1px solid #b89898;border-radius:50%;margin:0 0.2px;vertical-align:2px"></i><b>Copy<i style="display:inline-block;width:3px;height:3px;border:1px solid #b89898;border-radius:50%;margin:0 0.2px;vertical-align:2px"></i>of<i style="display:inline-block;width:3px;height:3px;border:1px solid #b89898;border-radius:50%;margin:0 0.2px;vertical-align:2px"></i></b></div><div style="position:static;white-space:nowrap"><b>Image_Central_1<i style="display:inline-block;width:3px;height:3px;border:1px solid #b89898;border-radius:50%;margin:0 0.2px;vertical-align:2px"></i>(2)</b><b style="color:#7a0000;font-weight:bold">¶</b></div></div>
<div style="left:1097px;top:762px;width:135px;height:69px;background:#dcdedc;border:1.5px solid #000"></div>
<div style="left:1064px;top:784px;width:200px;text-align:center;font-size:11px;line-height:13px;color:#222;letter-spacing:0.1px"><div style="position:static;white-space:nowrap">The<i style="display:inline-block;width:3px;height:3px;border:1px solid #b89898;border-radius:50%;margin:0 0.2px;vertical-align:2px"></i>name<i style="display:inline-block;width:3px;height:3px;border:1px solid #b89898;border-radius:50%;margin:0 0.2px;vertical-align:2px"></i>of<i style="display:inline-block;width:3px;height:3px;border:1px solid #b89898;border-radius:50%;margin:0 0.2px;vertical-align:2px"></i>this<i style="display:inline-block;width:3px;height:3px;border:1px solid #b89898;border-radius:50%;margin:0 0.2px;vertical-align:2px"></i>image<i style="display:inline-block;width:3px;height:3px;border:1px solid #b89898;border-radius:50%;margin:0 0.2px;vertical-align:2px"></i></div><div style="position:static;white-space:nowrap">frame<i style="display:inline-block;width:3px;height:3px;border:1px solid #b89898;border-radius:50%;margin:0 0.2px;vertical-align:2px"></i>is:<i style="display:inline-block;width:3px;height:3px;border:1px solid #b89898;border-radius:50%;margin:0 0.2px;vertical-align:2px"></i><b>Line_Central</b><b style="color:#7a0000;font-weight:bold">¶</b></div></div>
<div style="left:580px;top:792px;width:135px;height:69px;background:#dcdedc;border:1.5px solid #000"></div>
<div style="left:547px;top:807px;width:200px;text-align:center;font-size:11px;line-height:13px;color:#222;letter-spacing:0.1px"><div style="position:static;white-space:nowrap">The<i style="display:inline-block;width:3px;height:3px;border:1px solid #b89898;border-radius:50%;margin:0 0.2px;vertical-align:2px"></i>name<i style="display:inline-block;width:3px;height:3px;border:1px solid #b89898;border-radius:50%;margin:0 0.2px;vertical-align:2px"></i>of<i style="display:inline-block;width:3px;height:3px;border:1px solid #b89898;border-radius:50%;margin:0 0.2px;vertical-align:2px"></i>this<i style="display:inline-block;width:3px;height:3px;border:1px solid #b89898;border-radius:50%;margin:0 0.2px;vertical-align:2px"></i>image<i style="display:inline-block;width:3px;height:3px;border:1px solid #b89898;border-radius:50%;margin:0 0.2px;vertical-align:2px"></i></div><div style="position:static;white-space:nowrap">frame<i style="display:inline-block;width:3px;height:3px;border:1px solid #b89898;border-radius:50%;margin:0 0.2px;vertical-align:2px"></i>is:<i style="display:inline-block;width:3px;height:3px;border:1px solid #b89898;border-radius:50%;margin:0 0.2px;vertical-align:2px"></i><b>Copy<i style="display:inline-block;width:3px;height:3px;border:1px solid #b89898;border-radius:50%;margin:0 0.2px;vertical-align:2px"></i>of<i style="display:inline-block;width:3px;height:3px;border:1px solid #b89898;border-radius:50%;margin:0 0.2px;vertical-align:2px"></i></b></div><div style="position:static;white-space:nowrap"><b>Image_Lateral_1</b><b style="color:#7a0000;font-weight:bold">¶</b></div></div>
<div style="left:1085px;top:892px;width:135px;height:69px;background:#dcdedc;border:1.5px solid #000"></div>
<div style="left:1052px;top:908px;width:200px;text-align:center;font-size:11px;line-height:13px;color:#222;letter-spacing:0.1px"><div style="position:static;white-space:nowrap">The<i style="display:inline-block;width:3px;height:3px;border:1px solid #b89898;border-radius:50%;margin:0 0.2px;vertical-align:2px"></i>name<i style="display:inline-block;width:3px;height:3px;border:1px solid #b89898;border-radius:50%;margin:0 0.2px;vertical-align:2px"></i>of<i style="display:inline-block;width:3px;height:3px;border:1px solid #b89898;border-radius:50%;margin:0 0.2px;vertical-align:2px"></i>this<i style="display:inline-block;width:3px;height:3px;border:1px solid #b89898;border-radius:50%;margin:0 0.2px;vertical-align:2px"></i>image<i style="display:inline-block;width:3px;height:3px;border:1px solid #b89898;border-radius:50%;margin:0 0.2px;vertical-align:2px"></i></div><div style="position:static;white-space:nowrap">frame<i style="display:inline-block;width:3px;height:3px;border:1px solid #b89898;border-radius:50%;margin:0 0.2px;vertical-align:2px"></i>is:<i style="display:inline-block;width:3px;height:3px;border:1px solid #b89898;border-radius:50%;margin:0 0.2px;vertical-align:2px"></i></div><div style="position:static;white-space:nowrap"><b>Polyline_Central</b><b style="color:#7a0000;font-weight:bold">¶</b></div></div>
<svg style="left:0;top:0" width="1920" height="1080"><path d="M1093 193 L1042.6 224.3" stroke="#a2aaa4" stroke-width="1.2"/><path d="M1035 229 L1044.6 216.0 L1042.6 224.3 L1050.9 226.2Z" fill="#94a898"/></svg>
<svg style="left:0;top:0" width="1920" height="1080"><path d="M718 457 L782.1 492.6" stroke="#a2aaa4" stroke-width="1.2"/><path d="M790 497 L774.0 495.0 L782.1 492.6 L779.8 484.5Z" fill="#94a898"/></svg>
<svg style="left:0;top:0" width="1920" height="1080"><path d="M1096 576 L1044.6 608.2" stroke="#a2aaa4" stroke-width="1.2"/><path d="M1037 613 L1046.5 599.9 L1044.6 608.2 L1052.9 610.1Z" fill="#94a898"/></svg>
<svg style="left:0;top:0" width="1920" height="1080"><path d="M1091 816 L1033.9 768.7" stroke="#a2aaa4" stroke-width="1.2"/><path d="M1027 763 L1042.4 767.9 L1033.9 768.7 L1034.7 777.2Z" fill="#94a898"/></svg>
<svg style="left:0;top:0" width="1920" height="1080"><path d="M721 841 L784.2 876.6" stroke="#a2aaa4" stroke-width="1.2"/><path d="M792 881 L776.0 878.9 L784.2 876.6 L781.9 868.4Z" fill="#94a898"/></svg>
<svg style="left:0;top:0" width="1920" height="1080"><path d="M1079 947 L1028.9 905.7" stroke="#a2aaa4" stroke-width="1.2"/><path d="M1022 900 L1037.4 904.9 L1028.9 905.7 L1029.8 914.2Z" fill="#94a898"/></svg>
<div style="left:1502px;top:78px;width:418px;height:23px;background:#2c2c2c;"></div>
<div style="left:1502px;top:78px;width:120px;height:23px;background:#1e1e1e;"></div>
<svg style="left:1509px;top:83px;" width="20" height="17" viewBox="0 0 20 17"><rect x="2" y="2" width="12" height="11" fill="none" stroke="#f2f2f2" stroke-width="1.3"/><rect x="0" y="0" width="3.5" height="3.5" fill="#f2f2f2"/><rect x="12" y="0" width="3.5" height="3.5" fill="#f2f2f2"/><rect x="0" y="11" width="3.5" height="3.5" fill="#f2f2f2"/><circle cx="15" cy="13" r="3" fill="#1e1e1e" stroke="#f2f2f2" stroke-width="1.4"/></svg>
<div class="t" style="left:1532px;top:84px;font-size:13px;color:#f4f4f4;font-weight:bold;transform:scaleX(0.9953);">Properties</div>
<svg style="left:1603px;top:85px;" width="10" height="10" viewBox="0 0 10 10"><path d="M1 1 L9 9 M9 1 L1 9" stroke="#f2f2f2" stroke-width="1.4"/></svg>
<svg style="left:1630px;top:82px;" width="18" height="18" viewBox="0 0 18 18"><path d="M5 1 H16 V17 H1 V5Z" fill="none" stroke="#f2f2f2" stroke-width="1.4"/></svg>
<svg style="left:1671px;top:82px;" width="18" height="18" viewBox="0 0 18 18"><rect x="1.5" y="1.5" width="13" height="13" fill="none" stroke="#aaa" stroke-width="1"/><path d="M4 5 H12 M4 8 H10 M4 11 H8" stroke="#f2f2f2" stroke-width="1.6"/><circle cx="14" cy="14" r="3" fill="#2c2c2c" stroke="#f2f2f2" stroke-width="1.4"/></svg>
<div style="left:1702px;top:81px;width:1px;height:18px;background:#3a3a3a;"></div>
<div style="left:1881px;top:78px;width:39px;height:23px;background:#3f3f3f;"></div>
<svg style="left:1886px;top:88px;" width="10" height="6" viewBox="0 0 10 6"><path d="M0 0 H10 L5 6Z" fill="#f2f2f2"/></svg>
<svg style="left:1904px;top:82px;" width="12" height="16" viewBox="0 0 12 16"><path d="M3 0 H9 V2 H8 L9 8 L11 10 H7 V16 H5 V10 H1 L3 8 L4 2 H3Z" fill="#f2f2f2"/></svg>
<div style="left:1502px;top:101px;width:418px;height:27px;background:#2f2f2f;"></div>
<svg style="left:1510px;top:110px;" width="13" height="8" viewBox="0 0 13 8"><path d="M1 1 L6.5 6.5 L12 1" stroke="#f2f2f2" stroke-width="1.7" fill="none"/></svg>
<div class="t" style="left:1532px;top:111px;font-size:13px;color:#f0f0f0;font-weight:bold;">X, Y, <span style="text-decoration:underline;text-underline-offset:2px">Z</span></div>
<div style="left:1502px;top:286px;width:418px;height:25px;background:#2f2f2f;"></div>
<svg style="left:1510px;top:295px;" width="13" height="8" viewBox="0 0 13 8"><path d="M1 1 L6.5 6.5 L12 1" stroke="#f2f2f2" stroke-width="1.7" fill="none"/></svg>
<div class="t" style="left:1532px;top:294px;font-size:13px;color:#f0f0f0;font-weight:bold;"><span style="text-decoration:underline;text-underline-offset:2px">S</span>hape</div>
<div style="left:1502px;top:379px;width:418px;height:25px;background:#2f2f2f;"></div>
<svg style="left:1510px;top:388px;" width="13" height="8" viewBox="0 0 13 8"><path d="M1 1 L6.5 6.5 L12 1" stroke="#f2f2f2" stroke-width="1.7" fill="none"/></svg>
<div class="t" style="left:1532px;top:387px;font-size:13px;color:#f0f0f0;font-weight:bold;"><span style="text-decoration:underline;text-underline-offset:2px">F</span>ill</div>
<div style="left:1502px;top:447px;width:418px;height:26px;background:#2f2f2f;"></div>
<svg style="left:1510px;top:456px;" width="13" height="8" viewBox="0 0 13 8"><path d="M1 1 L6.5 6.5 L12 1" stroke="#f2f2f2" stroke-width="1.7" fill="none"/></svg>
<div class="t" style="left:1532px;top:455px;font-size:13px;color:#f0f0f0;font-weight:bold;"><span style="text-decoration:underline;text-underline-offset:2px">L</span>ine</div>
<div style="left:1502px;top:603px;width:418px;height:26px;background:#2f2f2f;"></div>
<svg style="left:1510px;top:612px;" width="13" height="8" viewBox="0 0 13 8"><path d="M1 1 L6.5 6.5 L12 1" stroke="#f2f2f2" stroke-width="1.7" fill="none"/></svg>
<div class="t" style="left:1532px;top:611px;font-size:13px;color:#f0f0f0;font-weight:bold;"><span style="text-decoration:underline;text-underline-offset:2px">D</span>rop Shadow</div>
<div style="left:1502px;top:731px;width:418px;height:26px;background:#2f2f2f;"></div>
<svg style="left:1510px;top:740px;" width="13" height="8" viewBox="0 0 13 8"><path d="M1 1 L6.5 6.5 L12 1" stroke="#f2f2f2" stroke-width="1.7" fill="none"/></svg>
<div class="t" style="left:1532px;top:739px;font-size:13px;color:#f0f0f0;font-weight:bold;"><span style="text-decoration:underline;text-underline-offset:2px">A</span>ttributes</div>
<div class="t" style="left:1523px;top:143px;font-size:12.5px;"><span style="text-decoration:underline">X</span>:</div>
<div style="left:1538px;top:140px;width:132px;height:19px;background:#3a3a3a;border:1px solid #474747"></div>
<div class="t" style="left:1543px;top:144px;font-size:12.5px;color:#e4e4e4;">0,000 mm</div>
<div style="left:1657px;top:141px;width:12px;height:17px;background:#4a4a4a;"></div>
<svg style="left:1659px;top:143px;" width="8" height="13" viewBox="0 0 8 13"><path d="M1 5 L4 2 L7 5Z M1 8 L4 11 L7 8Z" fill="#8a8a8a"/></svg>
<div class="t" style="left:1691px;top:143px;font-size:12.5px;"><span style="text-decoration:underline">W</span>:</div>
<div style="left:1711px;top:140px;width:126px;height:19px;background:#3a3a3a;border:1px solid #474747"></div>
<div class="t" style="left:1716px;top:144px;font-size:12.5px;color:#e4e4e4;">0,353 mm</div>
<div style="left:1824px;top:141px;width:12px;height:17px;background:#4a4a4a;"></div>
<svg style="left:1826px;top:143px;" width="8" height="13" viewBox="0 0 8 13"><path d="M1 5 L4 2 L7 5Z M1 8 L4 11 L7 8Z" fill="#8a8a8a"/></svg>
<svg style="left:1842px;top:153px;" width="16" height="16" viewBox="0 0 16 16"><path d="M6 10 L3 13 A2 2 0 0 1 1 11 L4 8 M10 6 L13 3 A2 2 0 0 0 11 1 L8 4 M5 2 V4 M2 5 H4 M11 12 V14 M12 11 H14" stroke="#d8d8d8" stroke-width="1.3" fill="none"/></svg>
<div class="t" style="left:1524px;top:173px;font-size:12.5px;"><span style="text-decoration:underline">Y</span>:</div>
<div style="left:1538px;top:170px;width:132px;height:19px;background:#3a3a3a;border:1px solid #474747"></div>
<div class="t" style="left:1543px;top:174px;font-size:12.5px;color:#e4e4e4;">0,000 mm</div>
<div style="left:1657px;top:171px;width:12px;height:17px;background:#4a4a4a;"></div>
<svg style="left:1659px;top:173px;" width="8" height="13" viewBox="0 0 8 13"><path d="M1 5 L4 2 L7 5Z M1 8 L4 11 L7 8Z" fill="#8a8a8a"/></svg>
<div class="t" style="left:1694px;top:173px;font-size:12.5px;"><span style="text-decoration:underline">H</span>:</div>
<div style="left:1711px;top:170px;width:126px;height:19px;background:#3a3a3a;border:1px solid #474747"></div>
<div class="t" style="left:1716px;top:174px;font-size:12.5px;color:#e4e4e4;">0,353 mm</div>
<div style="left:1824px;top:171px;width:12px;height:17px;background:#4a4a4a;"></div>
<svg style="left:1826px;top:173px;" width="8" height="13" viewBox="0 0 8 13"><path d="M1 5 L4 2 L7 5Z M1 8 L4 11 L7 8Z" fill="#8a8a8a"/></svg>
<svg style="left:1518px;top:201px;" width="16" height="15" viewBox="0 0 16 15"><path d="M1 13 H15 M3 13 L11 3 M5 8 Q8 10 8 13" stroke="#dcdcdc" stroke-width="1.3" fill="none"/></svg>
<div style="left:1538px;top:199px;width:67px;height:19px;background:#3a3a3a;border:1px solid #474747"></div>
<div class="t" style="left:1543px;top:203px;font-size:12.5px;color:#e4e4e4;">0,0 °</div>
<div style="left:1592px;top:200px;width:12px;height:17px;background:#4a4a4a;"></div>
<svg style="left:1594px;top:202px;" width="8" height="13" viewBox="0 0 8 13"><path d="M1 5 L4 2 L7 5Z M1 8 L4 11 L7 8Z" fill="#8a8a8a"/></svg>
<svg style="left:1612px;top:199px;" width="18" height="18" viewBox="0 0 18 18"><rect x="1" y="9" width="7" height="7" fill="#cfcfcf"/><rect x="9" y="2" width="7" height="7" fill="#9a9a9a"/><path d="M3 7 Q3 2 8 2" stroke="#cfcfcf" stroke-width="1.4" fill="none"/></svg>
<svg style="left:1634px;top:199px;" width="18" height="18" viewBox="0 0 18 18"><rect x="9" y="9" width="7" height="7" fill="#cfcfcf"/><rect x="1" y="2" width="7" height="7" fill="#9a9a9a"/><path d="M15 7 Q15 2 10 2" stroke="#cfcfcf" stroke-width="1.4" fill="none"/></svg>
<svg style="left:1673px;top:199px;" width="18" height="18" viewBox="0 0 18 18"><rect x="2" y="2" width="9" height="9" fill="#9a9a9a"/><rect x="6" y="6" width="9" height="9" fill="#d0d0d0"/></svg>
<svg style="left:1696px;top:199px;" width="18" height="18" viewBox="0 0 18 18"><rect x="2" y="2" width="9" height="9" fill="#9a9a9a"/><rect x="6" y="6" width="9" height="9" fill="#d0d0d0"/></svg>
<svg style="left:1720px;top:199px;" width="18" height="18" viewBox="0 0 18 18"><rect x="2" y="2" width="9" height="9" fill="#9a9a9a"/><rect x="6" y="6" width="9" height="9" fill="#d0d0d0"/></svg>
<svg style="left:1742px;top:199px;" width="18" height="18" viewBox="0 0 18 18"><rect x="2" y="2" width="9" height="9" fill="#9a9a9a"/><rect x="6" y="6" width="9" height="9" fill="#d0d0d0"/></svg>
<div class="t" style="left:1764px;top:202px;font-size:12.5px;color:#d8d8d8;">Z:</div>
<svg style="left:1516px;top:236px;" width="36" height="34" viewBox="0 0 36 34"><rect x="3" y="3" width="30" height="28" fill="#2a2a2a"/><circle cx="3" cy="3" r="2.5" fill="#555"/><circle cx="3" cy="17" r="2.5" fill="#555"/><circle cx="3" cy="31" r="2.5" fill="#555"/><circle cx="18" cy="3" r="2.5" fill="#555"/><circle cx="18" cy="17" r="2.5" fill="#555"/><circle cx="18" cy="31" r="2.5" fill="#555"/><circle cx="33" cy="3" r="2.5" fill="#555"/><circle cx="33" cy="17" r="2.5" fill="#555"/><circle cx="33" cy="31" r="2.5" fill="#555"/><rect x="0" y="12" width="9" height="9" fill="#e8e8e8"/><circle cx="18" cy="17" r="2.5" fill="#666"/></svg>
<svg style="left:1577px;top:244px;" width="17" height="16" viewBox="0 0 17 16"><path d="M7 1 V15 H1Z" fill="#cfcfcf"/><path d="M10 1 V15 H16Z" fill="#9a9a9a"/></svg>
<svg style="left:1600px;top:244px;" width="17" height="16" viewBox="0 0 17 16"><path d="M1 7 H15 L1 1Z" fill="#9a9a9a"/><path d="M1 9 H15 L1 15Z" fill="#cfcfcf"/></svg>
<svg style="left:1636px;top:242px;" width="16" height="18" viewBox="0 0 16 18"><path d="M4 8 V5 A4 4 0 0 1 12 5" stroke="#f2f2f2" stroke-width="1.8" fill="none"/><rect x="2" y="8" width="12" height="9" fill="#f2f2f2"/></svg>
<svg style="left:1658px;top:242px;" width="18" height="18" viewBox="0 0 18 18"><rect x="2" y="2" width="13" height="13" fill="none" stroke="#f2f2f2" stroke-width="1.3"/><rect x="0" y="0" width="4" height="4" fill="#f2f2f2"/><rect x="13" y="0" width="4" height="4" fill="#f2f2f2"/><rect x="0" y="13" width="4" height="4" fill="#f2f2f2"/><rect x="11" y="11" width="6" height="6" fill="#f2f2f2"/></svg>
<svg style="left:1693px;top:242px;" width="18" height="18" viewBox="0 0 18 18"><rect x="2" y="2" width="13" height="13" fill="none" stroke="#f2f2f2" stroke-width="1.3"/><rect x="0" y="0" width="4" height="4" fill="#f2f2f2"/><rect x="13" y="0" width="4" height="4" fill="#f2f2f2"/><rect x="0" y="13" width="4" height="4" fill="#f2f2f2"/><rect x="13" y="13" width="4" height="4" fill="#f2f2f2"/><rect x="5" y="5" width="6" height="4" fill="none" stroke="#f2f2f2"/><rect x="7" y="9" width="6" height="4" fill="none" stroke="#f2f2f2"/></svg>
<svg style="left:1716px;top:242px;" width="18" height="18" viewBox="0 0 18 18"><rect x="2" y="2" width="13" height="13" fill="none" stroke="#777" stroke-width="1" stroke-dasharray="2 2"/><rect x="5" y="5" width="6" height="4" fill="none" stroke="#bbb"/><rect x="7" y="9" width="6" height="4" fill="none" stroke="#bbb"/></svg>
<div style="left:1511px;top:323px;width:16px;height:16px;background:#d8d8d8;border:1px solid #888"></div>
<div class="t" style="left:1538px;top:326px;font-size:12.5px;color:#d8d8d8;"><span style="text-decoration:underline">E</span>dit...</div>
<svg style="left:1595px;top:322px;" width="16" height="17" viewBox="0 0 16 17"><path d="M2 16 V8 A7 7 0 0 1 9 1 H16" stroke="#9a9a9a" stroke-width="1.2" stroke-dasharray="2 1.5" fill="none"/></svg>
<div style="left:1617px;top:322px;width:100px;height:19px;background:#3a3a3a;border:1px solid #474747"></div>
<div class="t" style="left:1622px;top:326px;font-size:12.5px;color:#e4e4e4;">0,000 mm</div>
<div style="left:1704px;top:323px;width:12px;height:17px;background:#4a4a4a;"></div>
<svg style="left:1706px;top:325px;" width="8" height="13" viewBox="0 0 8 13"><path d="M1 5 L4 2 L7 5Z M1 8 L4 11 L7 8Z" fill="#8a8a8a"/></svg>
<div style="left:1510px;top:350px;width:22px;height:21px;background:#6b7aa4;border:1px solid #8090c0"></div>
<svg style="left:1512px;top:351px;" width="19" height="19" viewBox="0 0 19 19"><path d="M1 3 H18 M1 6 H18 M1 13 H18 M1 16 H18" stroke="#e0e0e0" stroke-width="1.2"/><path d="M9.5 5 L15 15 H4Z" fill="#aaa" stroke="#e0e0e0" stroke-width="0.8"/></svg>
<svg style="left:1534px;top:351px;" width="19" height="19" viewBox="0 0 19 19"><path d="M1 3 H18 M1 6 H18 M1 13 H18 M1 16 H18" stroke="#e0e0e0" stroke-width="1.2"/><path d="M9.5 5 L15 15 H4Z" fill="#aaa" stroke="#e0e0e0" stroke-width="0.8"/></svg>
<svg style="left:1557px;top:351px;" width="19" height="19" viewBox="0 0 19 19"><path d="M1 3 H18 M1 6 H18 M1 13 H18 M1 16 H18" stroke="#e0e0e0" stroke-width="1.2"/><path d="M9.5 5 L15 15 H4Z" fill="#aaa" stroke="#e0e0e0" stroke-width="0.8"/></svg>
<svg style="left:1580px;top:351px;" width="19" height="19" viewBox="0 0 19 19"><path d="M1 3 H18 M1 6 H18 M1 13 H18 M1 16 H18" stroke="#e0e0e0" stroke-width="1.2"/><path d="M9.5 5 L15 15 H4Z" fill="#aaa" stroke="#e0e0e0" stroke-width="0.8"/></svg>
<svg style="left:1603px;top:351px;" width="19" height="19" viewBox="0 0 19 19"><path d="M1 3 H18 M1 6 H18 M1 13 H18 M1 16 H18" stroke="#e0e0e0" stroke-width="1.2"/><path d="M9.5 5 L15 15 H4Z" fill="#aaa" stroke="#e0e0e0" stroke-width="0.8"/></svg>
<svg style="left:1509px;top:412px;" width="29" height="29" viewBox="0 0 29 29"><circle cx="14" cy="14" r="13" fill="#303030" stroke="#9a9a9a" stroke-width="1"/><circle cx="21" cy="21" r="5.5" fill="#555" stroke="#c8c8c8" stroke-width="1"/></svg>
<svg style="left:1552px;top:417px;" width="15" height="16" viewBox="0 0 15 16"><path d="M1 1 H14 V9 Q14 14 7.5 16 Q1 14 1 9Z" fill="#f2f2f2"/><path d="M4 5 H7 M8 5 H11 M5 10 Q7.5 12 10 10" stroke="#414141" stroke-width="1.2" fill="none"/></svg>
<svg style="left:1571px;top:412px;" width="29" height="29" viewBox="0 0 29 29"><circle cx="14" cy="14" r="13" fill="#303030" stroke="#9a9a9a" stroke-width="1"/></svg>
<div style="left:1601px;top:415px;width:96px;height:22px;background:#3c3c3c;border:1px solid #505050;border-radius:2px"></div>
<div class="t" style="left:1604px;top:420px;font-size:12.5px;color:#e8e8e8;">Normal</div>
<div style="left:1681px;top:417px;width:14px;height:18px;background:#333;"></div>
<svg style="left:1684px;top:424px;" width="8" height="5" viewBox="0 0 8 5"><path d="M0 0 H8 L4 5Z" fill="#aaa"/></svg>
<div style="left:1713px;top:416px;width:19px;height:19px;background:#6b7aa4;border:1px solid #8090c0"></div>
<svg style="left:1716px;top:418px;" width="13" height="15" viewBox="0 0 13 15"><path d="M1 1 V9 A5.5 5.5 0 0 0 12 9 V1 Q6.5 4 1 1Z" fill="#f2f2f2"/><path d="M4 4 V9 A2.5 2.5 0 0 0 9 9 V4" fill="#6b7aa4"/></svg>
<svg style="left:1737px;top:418px;" width="16" height="15" viewBox="0 0 16 15"><path d="M1 3 Q4 0 8 3 Q12 0 15 3 V8 Q15 14 8 15 Q1 14 1 8Z" fill="#f2f2f2"/></svg>
<svg style="left:1510px;top:483px;" width="16" height="17" viewBox="0 0 16 17"><path d="M1 2 H15 M1 5 H15 M1 8 H4 M6 8 H9 M11 8 H14" stroke="#f2f2f2" stroke-width="1.3"/><path d="M5 16 L7 12 L14 9 L13 13Z" fill="#f2f2f2"/></svg>
<div style="left:1530px;top:481px;width:198px;height:22px;background:#3c3c3c;border:1px solid #505050"></div>
<svg style="left:1531px;top:482px;" width="128" height="20" viewBox="0 0 128 20"><rect x="0" y="0" width="128" height="20" fill="#dcdcdc"/><path d="M0 16 L128 2" stroke="#555" stroke-width="2"/></svg>
<div class="t" style="left:1665px;top:486px;font-size:12.5px;color:#e8e8e8;">No Styl<span style="opacity:.7">e</span></div>
<div style="left:1712px;top:483px;width:14px;height:18px;background:#333;"></div>
<svg style="left:1715px;top:489px;" width="8" height="5" viewBox="0 0 8 5"><path d="M0 0 H8 L4 5Z" fill="#aaa"/></svg>
<svg style="left:1733px;top:483px;" width="17" height="17" viewBox="0 0 17 17"><path d="M2 15 L3 11 L12 2 L15 5 L6 14Z" fill="#f2f2f2"/></svg>
<svg style="left:1764px;top:483px;" width="17" height="17" viewBox="0 0 17 17"><path d="M8.5 1 V16 M1 8.5 H16" stroke="#f2f2f2" stroke-width="1.8"/></svg>
<svg style="left:1509px;top:509px;" width="29" height="29" viewBox="0 0 29 29"><circle cx="14" cy="14" r="13" fill="#303030" stroke="#9a9a9a" stroke-width="1"/></svg>
<svg style="left:1552px;top:514px;" width="15" height="16" viewBox="0 0 15 16"><path d="M1 1 H14 V9 Q14 14 7.5 16 Q1 14 1 9Z" fill="#f2f2f2"/><path d="M4 5 H7 M8 5 H11 M5 10 Q7.5 12 10 10" stroke="#414141" stroke-width="1.2" fill="none"/></svg>
<svg style="left:1571px;top:509px;" width="29" height="29" viewBox="0 0 29 29"><circle cx="14" cy="14" r="13" fill="#303030" stroke="#9a9a9a" stroke-width="1"/></svg>
<div style="left:1601px;top:512px;width:96px;height:22px;background:#3c3c3c;border:1px solid #505050;border-radius:2px"></div>
<div class="t" style="left:1604px;top:517px;font-size:12.5px;color:#e8e8e8;">Normal</div>
<div style="left:1681px;top:514px;width:14px;height:18px;background:#333;"></div>
<svg style="left:1684px;top:521px;" width="8" height="5" viewBox="0 0 8 5"><path d="M0 0 H8 L4 5Z" fill="#aaa"/></svg>
<div style="left:1511px;top:545px;width:97px;height:20px;background:#3a3a3a;border:1px solid #474747"></div>
<div class="t" style="left:1516px;top:549px;font-size:12.5px;color:#e4e4e4;">0,353 mm</div>
<div style="left:1595px;top:546px;width:12px;height:18px;background:#4a4a4a;"></div>
<svg style="left:1597px;top:548px;" width="8" height="14" viewBox="0 0 8 14"><path d="M1 5 L4 2 L7 5Z M1 9 L4 12 L7 9Z" fill="#8a8a8a"/></svg>
<div style="left:1625px;top:545px;width:96px;height:22px;background:#3c3c3c;border:1px solid #505050;border-radius:2px"></div>
<div style="left:1705px;top:547px;width:14px;height:18px;background:#333;"></div>
<svg style="left:1708px;top:554px;" width="8" height="5" viewBox="0 0 8 5"><path d="M0 0 H8 L4 5Z" fill="#aaa"/></svg>
<div style="left:1628px;top:554px;width:71px;height:2px;background:#f0f0f0;"></div>
<div style="left:1510px;top:574px;width:22px;height:22px;background:#6b7aa4;border:1px solid #8090c0"></div>
<svg style="left:1513px;top:577px;" width="16" height="16" viewBox="0 0 16 16"><path d="M2 16 V7 A6 6 0 0 1 14 7 V16 H10 V9 H6 V16Z" fill="#f2f2f2"/><rect x="6.5" y="8.5" width="3" height="3" fill="#333"/></svg>
<svg style="left:1538px;top:577px;" width="16" height="16" viewBox="0 0 16 16"><path d="M2 16 V7 A6 6 0 0 1 14 7 V16 H10 V9 H6 V16Z" fill="#f2f2f2"/><rect x="6.5" y="8.5" width="3" height="3" fill="#333"/></svg>
<svg style="left:1561px;top:577px;" width="16" height="16" viewBox="0 0 16 16"><path d="M2 16 V7 A6 6 0 0 1 14 7 V16 H10 V9 H6 V16Z" fill="#f2f2f2"/><rect x="6.5" y="8.5" width="3" height="3" fill="#333"/></svg>
<div style="left:1593px;top:574px;width:22px;height:22px;background:#6b7aa4;border:1px solid #8090c0"></div>
<svg style="left:1596px;top:577px;" width="16" height="16" viewBox="0 0 16 16"><path d="M1 4 H15 V9 H9 V15 H1Z" fill="#f2f2f2"/><rect x="4" y="6.5" width="3" height="3" fill="#333"/></svg>
<svg style="left:1621px;top:577px;" width="16" height="16" viewBox="0 0 16 16"><path d="M1 4 H15 V9 H9 V15 H1Z" fill="#f2f2f2"/><rect x="4" y="6.5" width="3" height="3" fill="#333"/></svg>
<svg style="left:1644px;top:577px;" width="16" height="16" viewBox="0 0 16 16"><path d="M1 4 H15 V9 H9 V15 H1Z" fill="#f2f2f2"/><rect x="4" y="6.5" width="3" height="3" fill="#333"/></svg>
<svg style="left:1509px;top:639px;" width="25" height="22" viewBox="0 0 25 22"><circle cx="9" cy="11" r="8" fill="#2a2a2a"/><circle cx="15" cy="11" r="8" fill="#555" opacity="0.5"/></svg>
<svg style="left:1537px;top:636px;" width="29" height="29" viewBox="0 0 29 29"><circle cx="14" cy="14" r="13" fill="#303030" stroke="#9a9a9a" stroke-width="1"/><circle cx="21" cy="21" r="5.5" fill="#555" stroke="#c8c8c8" stroke-width="1"/></svg>
<div style="left:1568px;top:639px;width:94px;height:22px;background:#3c3c3c;border:1px solid #505050;border-radius:2px"></div>
<div class="t" style="left:1571px;top:644px;font-size:12.5px;color:#e8e8e8;">Normal</div>
<div style="left:1646px;top:641px;width:14px;height:18px;background:#333;"></div>
<svg style="left:1649px;top:648px;" width="8" height="5" viewBox="0 0 8 5"><path d="M0 0 H8 L4 5Z" fill="#aaa"/></svg>
<div style="left:1676px;top:642px;width:15px;height:15px;background:#777;border:2px solid #d0d0d0"></div>
<div class="t" style="left:1523px;top:677px;font-size:12.5px;color:#d8d8d8;">X:</div>
<div style="left:1538px;top:674px;width:97px;height:20px;background:#3a3a3a;border:1px solid #474747"></div>
<div class="t" style="left:1543px;top:678px;font-size:12.5px;color:#e4e4e4;">1,764 mm</div>
<div style="left:1622px;top:675px;width:12px;height:18px;background:#4a4a4a;"></div>
<svg style="left:1624px;top:677px;" width="8" height="14" viewBox="0 0 8 14"><path d="M1 5 L4 2 L7 5Z M1 9 L4 12 L7 9Z" fill="#8a8a8a"/></svg>
<div class="t" style="left:1656px;top:677px;font-size:12.5px;color:#d8d8d8;">Radius:</div>
<div style="left:1702px;top:674px;width:99px;height:20px;background:#3a3a3a;border:1px solid #474747"></div>
<div class="t" style="left:1707px;top:678px;font-size:12.5px;color:#e4e4e4;">1,764 mm</div>
<div style="left:1788px;top:675px;width:12px;height:18px;background:#4a4a4a;"></div>
<svg style="left:1790px;top:677px;" width="8" height="14" viewBox="0 0 8 14"><path d="M1 5 L4 2 L7 5Z M1 9 L4 12 L7 9Z" fill="#8a8a8a"/></svg>
<div class="t" style="left:1524px;top:707px;font-size:12.5px;color:#d8d8d8;">Y:</div>
<div style="left:1538px;top:704px;width:97px;height:20px;background:#3a3a3a;border:1px solid #474747"></div>
<div class="t" style="left:1543px;top:708px;font-size:12.5px;color:#e4e4e4;">1,764 mm</div>
<div style="left:1622px;top:705px;width:12px;height:18px;background:#4a4a4a;"></div>
<svg style="left:1624px;top:707px;" width="8" height="14" viewBox="0 0 8 14"><path d="M1 5 L4 2 L7 5Z M1 9 L4 12 L7 9Z" fill="#8a8a8a"/></svg>
<div class="t" style="left:1651px;top:707px;font-size:12.5px;color:#d8d8d8;">Opacity:</div>
<div style="left:1702px;top:704px;width:75px;height:20px;background:#3a3a3a;border:1px solid #474747"></div>
<div class="t" style="left:1707px;top:708px;font-size:12.5px;color:#e4e4e4;">100 %</div>
<div style="left:1764px;top:705px;width:12px;height:18px;background:#4a4a4a;"></div>
<svg style="left:1766px;top:707px;" width="8" height="14" viewBox="0 0 8 14"><path d="M1 5 L4 2 L7 5Z M1 9 L4 12 L7 9Z" fill="#8a8a8a"/></svg>
<svg style="left:1783px;top:704px;" width="16" height="16" viewBox="0 0 16 16"><rect x="1" y="1" width="8" height="8" fill="none" stroke="#f2f2f2" stroke-width="1.3"/><rect x="6" y="6" width="9" height="9" fill="#f2f2f2"/></svg>
<svg style="left:1509px;top:767px;" width="17" height="17" viewBox="0 0 17 17"><path d="M1 9 L9 1 H16 V8 L8 16Z" fill="none" stroke="#d8d8d8" stroke-width="1.4"/><circle cx="12.5" cy="4.5" r="1.5" fill="none" stroke="#d8d8d8"/><path d="M5 10 L9 6 M7 12 L11 8" stroke="#d8d8d8"/></svg>
<div style="left:1530px;top:766px;width:110px;height:23px;background:#3d4a5c;border:1px solid #7d8dbe;border-radius:2px"></div>
<div class="t" style="left:1534px;top:771px;font-size:12.5px;color:#f0f0f0;transform:scaleX(1.0533);">Image_Central_1</div>
<svg style="left:1656px;top:768px;" width="17" height="16" viewBox="0 0 17 16"><rect x="4" y="0" width="9" height="4" fill="#f2f2f2"/><rect x="0" y="4" width="17" height="8" rx="2" fill="#f2f2f2"/><rect x="4" y="9" width="9" height="6" fill="#414141" stroke="#f2f2f2" stroke-width="1.5"/></svg>
<svg style="left:1711px;top:768px;" width="15" height="17" viewBox="0 0 15 17"><rect x="2" y="0" width="12" height="17" rx="1" fill="#f2f2f2"/><path d="M9 1 V7 L11 5.5 L13 7 V1" fill="#414141"/><path d="M1 3 H3 M1 7 H3 M1 11 H3" stroke="#414141"/></svg>
<svg style="left:1741px;top:768px;" width="17" height="17" viewBox="0 0 17 17"><path d="M1 1 H16 V12 H6 L4 16 L3 12 H1Z" fill="#f2f2f2"/><path d="M4 4 H13 M4 6.5 H13 M4 9 H10" stroke="#414141" stroke-width="1.1"/></svg>
<svg style="left:1765px;top:768px;" width="16" height="16" viewBox="0 0 16 16"><path d="M8 0 L9.5 3 L13 2 L12.5 5.5 L16 7 L13.5 9.5 L15 13 L11.5 13 L10 16 L8 13.5 L6 16 L4.5 13 L1 13 L2.5 9.5 L0 7 L3.5 5.5 L3 2 L6.5 3Z" fill="#f2f2f2"/><circle cx="8" cy="8" r="2.5" fill="#414141"/></svg>
<div style="left:0px;top:1043px;width:1920px;height:37px;background:#3d3d3d;"></div>
<div style="left:0px;top:1043px;width:1920px;height:1px;background:#2e2e2e;"></div>
<div style="left:727px;top:1052px;width:92px;height:20px;background:#3a3a3a;border:1px solid #474747"></div>
<div class="t" style="left:732px;top:1056px;font-size:12.5px;color:#e4e4e4;">35,00 %</div>
<div style="left:806px;top:1053px;width:12px;height:18px;background:#4a4a4a;"></div>
<svg style="left:808px;top:1055px;" width="8" height="14" viewBox="0 0 8 14"><path d="M1 5 L4 2 L7 5Z M1 9 L4 12 L7 9Z" fill="#8a8a8a"/></svg>
<div style="left:823px;top:1047px;width:30px;height:30px;background:#474747;"></div>
<svg style="left:829px;top:1053px;" width="18" height="18" viewBox="0 0 18 18"><circle cx="7.5" cy="7.5" r="5.5" fill="none" stroke="#f2f2f2" stroke-width="1.6"/><path d="M5 7.5 H10 M11.5 11.5 L16 16" stroke="#f2f2f2" stroke-width="1.8"/></svg>
<div style="left:856px;top:1047px;width:30px;height:30px;background:#474747;"></div>
<svg style="left:862px;top:1053px;" width="18" height="18" viewBox="0 0 18 18"><circle cx="7.5" cy="7.5" r="5.5" fill="none" stroke="#f2f2f2" stroke-width="1.6"/><circle cx="7.5" cy="7.5" r="2" fill="#f2f2f2"/><path d="M11.5 11.5 L16 16" stroke="#f2f2f2" stroke-width="1.8"/></svg>
<div style="left:889px;top:1047px;width:30px;height:30px;background:#474747;"></div>
<svg style="left:895px;top:1053px;" width="18" height="18" viewBox="0 0 18 18"><circle cx="7.5" cy="7.5" r="5.5" fill="none" stroke="#f2f2f2" stroke-width="1.6"/><path d="M5 7.5 H10 M7.5 5 V10 M11.5 11.5 L16 16" stroke="#f2f2f2" stroke-width="1.8"/></svg>
<div style="left:924px;top:1047px;width:30px;height:30px;background:#474747;"></div>
<svg style="left:930px;top:1053px;" width="18" height="18" viewBox="0 0 18 18"><path d="M3 3 V15 M5 9 H16 M5 9 L9 5 M5 9 L9 13" stroke="#f2f2f2" stroke-width="1.8" fill="none"/></svg>
<div style="left:956px;top:1047px;width:29px;height:30px;background:#474747;"></div>
<svg style="left:961px;top:1053px;" width="18" height="18" viewBox="0 0 18 18"><path d="M3 9 H16 M3 9 L7 5 M3 9 L7 13" stroke="#f2f2f2" stroke-width="1.8" fill="none"/></svg>
<div style="left:987px;top:1051px;width:71px;height:22px;background:#3c3c3c;border:1px solid #555;border-radius:3px"></div>
<div style="left:1041px;top:1052px;width:1px;height:20px;background:#555;"></div>
<div class="t" style="left:1010px;top:1057px;font-size:12.5px;color:#e0e0e0;">1</div>
<svg style="left:1045px;top:1055px;" width="8" height="14" viewBox="0 0 8 14"><path d="M1 5 L4 2 L7 5Z M1 9 L4 12 L7 9Z" fill="#666"/></svg>
<div class="t" style="left:1063px;top:1057px;font-size:12.5px;color:#e0e0e0;">of 5</div>
<div style="left:1087px;top:1047px;width:29px;height:30px;background:#474747;"></div>
<svg style="left:1092px;top:1053px;" width="18" height="18" viewBox="0 0 18 18"><path d="M2 9 H15 M15 9 L11 5 M15 9 L11 13" stroke="#f2f2f2" stroke-width="1.8" fill="none"/></svg>
<div style="left:1117px;top:1047px;width:30px;height:30px;background:#474747;"></div>
<svg style="left:1123px;top:1053px;" width="18" height="18" viewBox="0 0 18 18"><path d="M15 3 V15 M2 9 H13 M13 9 L9 5 M13 9 L9 13" stroke="#f2f2f2" stroke-width="1.8" fill="none"/></svg>
<div style="left:1153px;top:1051px;width:123px;height:22px;background:#3c3c3c;border:1px solid #555;border-radius:3px"></div>
<div style="left:1155px;top:1056px;width:16px;height:13px;background:#000;"></div>
<div class="t" style="left:1177px;top:1057px;font-size:12.5px;color:#e8e8e8;transform:scaleX(1.0440);">Fondo</div>
<div style="left:1259px;top:1052px;width:1px;height:20px;background:#555;"></div>
<svg style="left:1263px;top:1055px;" width="8" height="14" viewBox="0 0 8 14"><path d="M1 5 L4 2 L7 5Z M1 9 L4 12 L7 9Z" fill="#666"/></svg>
<div class="t" style="left:1590px;top:1057px;font-size:12.5px;color:#e0e0e0;transform:scaleX(0.9585);">X:&nbsp; 456,788&nbsp;&nbsp;&nbsp; Y:&nbsp; 296,149</div>
<div style="left:1735px;top:1051px;width:56px;height:22px;background:#3c3c3c;border:1px solid #555;border-radius:3px"></div>
<div class="t" style="left:1738px;top:1057px;font-size:12.5px;color:#e8e8e8;">mm</div>
<div style="left:1774px;top:1052px;width:1px;height:20px;background:#555;"></div>
<svg style="left:1778px;top:1055px;" width="8" height="14" viewBox="0 0 8 14"><path d="M1 5 L4 2 L7 5Z M1 9 L4 12 L7 9Z" fill="#666"/></svg>
<div style="left:1797px;top:1049px;width:99px;height:25px;background:#404040;border:1px solid #555;border-radius:3px"></div>
<div style="left:0px;top:0px;width:1px;height:1080px;background:#8c8c84;"></div></body></html>
